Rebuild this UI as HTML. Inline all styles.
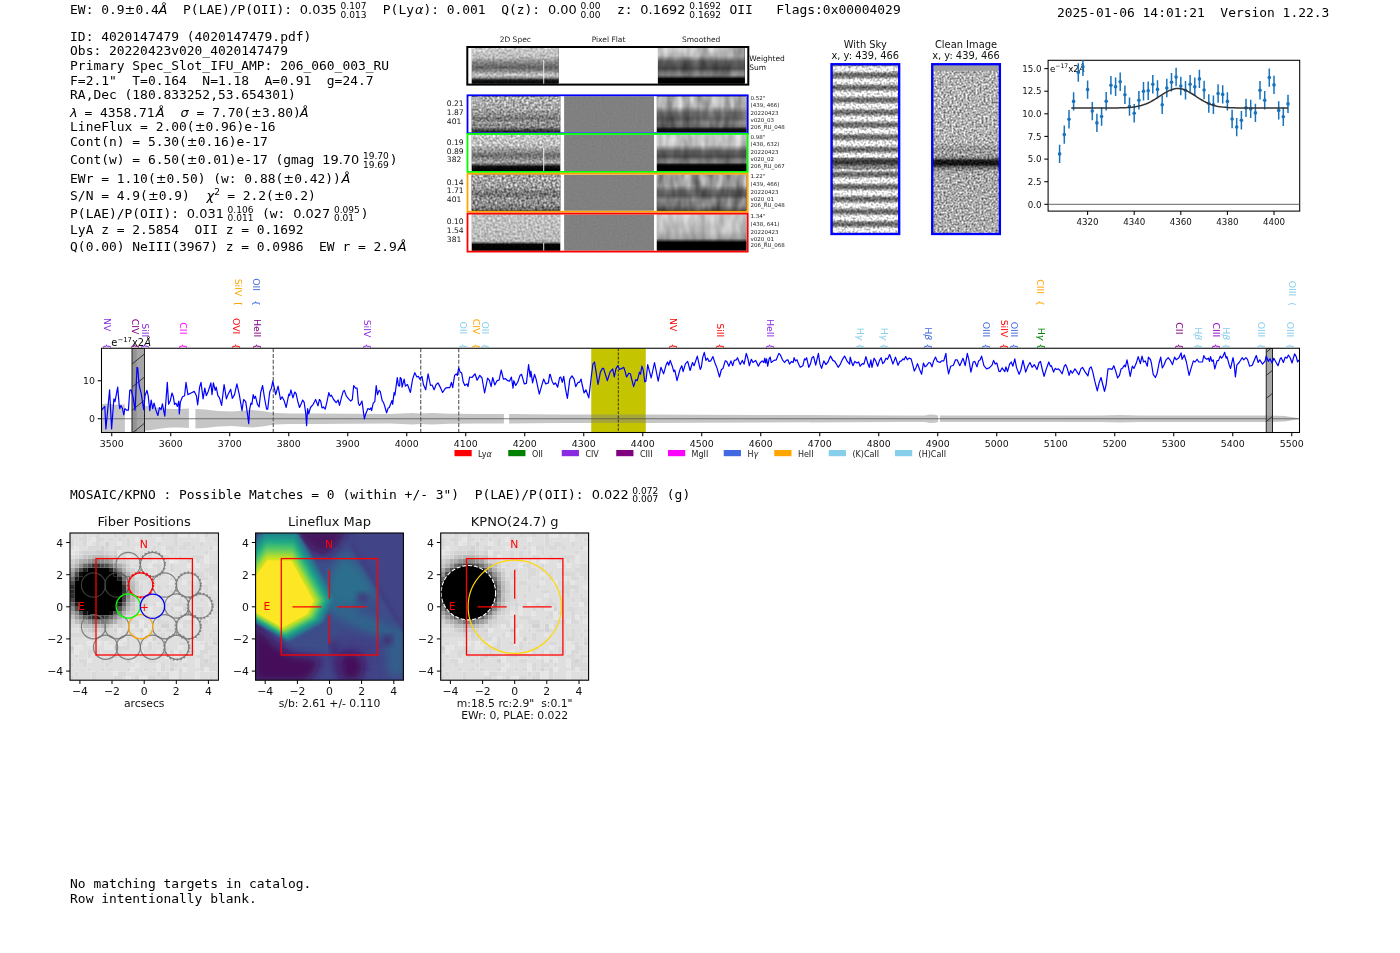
<!DOCTYPE html>
<html><head><meta charset="utf-8"><title>4020147479</title>
<style>
html,body{margin:0;padding:0;background:#fff}
svg{display:block}
text{fill:#000;white-space:pre}
.m{font-family:"DejaVu Sans Mono","Liberation Mono",monospace;font-size:12.93px}
.s{font-family:"DejaVu Sans","Liberation Sans",sans-serif;font-size:12.93px}
.i{font-family:"DejaVu Sans","Liberation Sans",sans-serif;font-size:12.93px;font-style:italic}
.t{font-family:"DejaVu Sans","Liberation Sans",sans-serif;font-size:9.4px;fill:#1a1a1a}
</style></head><body>
<svg width="1400" height="953" viewBox="0 0 1400 953">
<defs>
<linearGradient id="vg1" x1="0" y1="0" x2="0" y2="1"><stop offset="0" stop-color="#cccccc"/><stop offset="0.25" stop-color="#bdbdbd"/><stop offset="0.42" stop-color="#808080"/><stop offset="0.55" stop-color="#616161"/><stop offset="0.66" stop-color="#8c8c8c"/><stop offset="0.76" stop-color="#cccccc"/><stop offset="0.84" stop-color="#8c8c8c"/><stop offset="0.9" stop-color="#1a1a1a"/><stop offset="1" stop-color="#050505"/></linearGradient>
<filter id="nf1" x="0" y="0" width="100%" height="100%" color-interpolation-filters="sRGB"><feTurbulence type="fractalNoise" baseFrequency="0.42" numOctaves="1" seed="11" result="t"/><feColorMatrix in="t" type="matrix" values="1 0 0 0 0 1 0 0 0 0 1 0 0 0 0 0 0 0 0 1" result="g"/><feComposite in="SourceGraphic" in2="g" operator="arithmetic" k1="0.55" k2="0.725" k3="0.08" k4="-0.040"/></filter>
<linearGradient id="vg2" x1="0" y1="0" x2="0" y2="1"><stop offset="0" stop-color="#bdbdbd"/><stop offset="0.22" stop-color="#adadad"/><stop offset="0.38" stop-color="#5c5c5c"/><stop offset="0.58" stop-color="#474747"/><stop offset="0.68" stop-color="#757575"/><stop offset="0.76" stop-color="#858585"/><stop offset="0.82" stop-color="#474747"/><stop offset="0.86" stop-color="#050505"/><stop offset="1" stop-color="#000000"/></linearGradient>
<filter id="nf2" x="0" y="0" width="100%" height="100%" color-interpolation-filters="sRGB"><feTurbulence type="fractalNoise" baseFrequency="0.11 0.05" numOctaves="2" seed="5" result="t"/><feColorMatrix in="t" type="matrix" values="1 0 0 0 0 1 0 0 0 0 1 0 0 0 0 0 0 0 0 1" result="g"/><feComposite in="SourceGraphic" in2="g" operator="arithmetic" k1="0.7" k2="0.650" k3="0.0" k4="-0.000"/></filter>
<linearGradient id="vg3" x1="0" y1="0" x2="0" y2="1"><stop offset="0" stop-color="#b2b2b2"/><stop offset="0.35" stop-color="#a8a8a8"/><stop offset="0.5" stop-color="#8f8f8f"/><stop offset="0.62" stop-color="#757575"/><stop offset="0.72" stop-color="#949494"/><stop offset="0.85" stop-color="#8a8a8a"/><stop offset="0.93" stop-color="#474747"/><stop offset="1" stop-color="#1a1a1a"/></linearGradient>
<filter id="nf3" x="0" y="0" width="100%" height="100%" color-interpolation-filters="sRGB"><feTurbulence type="fractalNoise" baseFrequency="0.45" numOctaves="1" seed="20" result="t"/><feColorMatrix in="t" type="matrix" values="1 0 0 0 0 1 0 0 0 0 1 0 0 0 0 0 0 0 0 1" result="g"/><feComposite in="SourceGraphic" in2="g" operator="arithmetic" k1="1.25" k2="0.375" k3="0.15" k4="-0.075"/></filter>
<linearGradient id="vg4" x1="0" y1="0" x2="0" y2="1"><stop offset="0" stop-color="#808080"/><stop offset="1" stop-color="#808080"/></linearGradient>
<filter id="nf4" x="0" y="0" width="100%" height="100%" color-interpolation-filters="sRGB"><feTurbulence type="fractalNoise" baseFrequency="0.5" numOctaves="1" seed="40" result="t"/><feColorMatrix in="t" type="matrix" values="1 0 0 0 0 1 0 0 0 0 1 0 0 0 0 0 0 0 0 1" result="g"/><feComposite in="SourceGraphic" in2="g" operator="arithmetic" k1="0.12" k2="0.940" k3="0.0" k4="-0.000"/></filter>
<linearGradient id="vg5" x1="0" y1="0" x2="0" y2="1"><stop offset="0" stop-color="#b8b8b8"/><stop offset="0.28" stop-color="#adadad"/><stop offset="0.45" stop-color="#6b6b6b"/><stop offset="0.62" stop-color="#5c5c5c"/><stop offset="0.74" stop-color="#757575"/><stop offset="0.84" stop-color="#666666"/><stop offset="0.91" stop-color="#141414"/><stop offset="1" stop-color="#000000"/></linearGradient>
<filter id="nf5" x="0" y="0" width="100%" height="100%" color-interpolation-filters="sRGB"><feTurbulence type="fractalNoise" baseFrequency="0.12 0.045" numOctaves="2" seed="60" result="t"/><feColorMatrix in="t" type="matrix" values="1 0 0 0 0 1 0 0 0 0 1 0 0 0 0 0 0 0 0 1" result="g"/><feComposite in="SourceGraphic" in2="g" operator="arithmetic" k1="0.9" k2="0.550" k3="0.0" k4="-0.000"/></filter>
<linearGradient id="vg6" x1="0" y1="0" x2="0" y2="1"><stop offset="0" stop-color="#c7c7c7"/><stop offset="0.3" stop-color="#bdbdbd"/><stop offset="0.46" stop-color="#8c8c8c"/><stop offset="0.58" stop-color="#6b6b6b"/><stop offset="0.68" stop-color="#8c8c8c"/><stop offset="0.76" stop-color="#a8a8a8"/><stop offset="0.82" stop-color="#666666"/><stop offset="0.88" stop-color="#0d0d0d"/><stop offset="1" stop-color="#000000"/></linearGradient>
<filter id="nf6" x="0" y="0" width="100%" height="100%" color-interpolation-filters="sRGB"><feTurbulence type="fractalNoise" baseFrequency="0.45" numOctaves="1" seed="21" result="t"/><feColorMatrix in="t" type="matrix" values="1 0 0 0 0 1 0 0 0 0 1 0 0 0 0 0 0 0 0 1" result="g"/><feComposite in="SourceGraphic" in2="g" operator="arithmetic" k1="0.9" k2="0.550" k3="0.108" k4="-0.054"/></filter>
<linearGradient id="vg7" x1="0" y1="0" x2="0" y2="1"><stop offset="0" stop-color="#808080"/><stop offset="1" stop-color="#808080"/></linearGradient>
<filter id="nf7" x="0" y="0" width="100%" height="100%" color-interpolation-filters="sRGB"><feTurbulence type="fractalNoise" baseFrequency="0.5" numOctaves="1" seed="41" result="t"/><feColorMatrix in="t" type="matrix" values="1 0 0 0 0 1 0 0 0 0 1 0 0 0 0 0 0 0 0 1" result="g"/><feComposite in="SourceGraphic" in2="g" operator="arithmetic" k1="0.12" k2="0.940" k3="0.0" k4="-0.000"/></filter>
<linearGradient id="vg8" x1="0" y1="0" x2="0" y2="1"><stop offset="0" stop-color="#c7c7c7"/><stop offset="0.28" stop-color="#b8b8b8"/><stop offset="0.45" stop-color="#5c5c5c"/><stop offset="0.6" stop-color="#4c4c4c"/><stop offset="0.7" stop-color="#757575"/><stop offset="0.77" stop-color="#7a7a7a"/><stop offset="0.82" stop-color="#1a1a1a"/><stop offset="0.86" stop-color="#000000"/><stop offset="1" stop-color="#000000"/></linearGradient>
<filter id="nf8" x="0" y="0" width="100%" height="100%" color-interpolation-filters="sRGB"><feTurbulence type="fractalNoise" baseFrequency="0.12 0.045" numOctaves="2" seed="61" result="t"/><feColorMatrix in="t" type="matrix" values="1 0 0 0 0 1 0 0 0 0 1 0 0 0 0 0 0 0 0 1" result="g"/><feComposite in="SourceGraphic" in2="g" operator="arithmetic" k1="0.6" k2="0.700" k3="0.0" k4="-0.000"/></filter>
<linearGradient id="vg9" x1="0" y1="0" x2="0" y2="1"><stop offset="0" stop-color="#a3a3a3"/><stop offset="0.3" stop-color="#a3a3a3"/><stop offset="0.45" stop-color="#858585"/><stop offset="0.55" stop-color="#707070"/><stop offset="0.68" stop-color="#949494"/><stop offset="0.85" stop-color="#8a8a8a"/><stop offset="1" stop-color="#616161"/></linearGradient>
<filter id="nf9" x="0" y="0" width="100%" height="100%" color-interpolation-filters="sRGB"><feTurbulence type="fractalNoise" baseFrequency="0.45" numOctaves="1" seed="22" result="t"/><feColorMatrix in="t" type="matrix" values="1 0 0 0 0 1 0 0 0 0 1 0 0 0 0 0 0 0 0 1" result="g"/><feComposite in="SourceGraphic" in2="g" operator="arithmetic" k1="1.45" k2="0.275" k3="0.174" k4="-0.087"/></filter>
<linearGradient id="vg10" x1="0" y1="0" x2="0" y2="1"><stop offset="0" stop-color="#808080"/><stop offset="1" stop-color="#808080"/></linearGradient>
<filter id="nf10" x="0" y="0" width="100%" height="100%" color-interpolation-filters="sRGB"><feTurbulence type="fractalNoise" baseFrequency="0.5" numOctaves="1" seed="42" result="t"/><feColorMatrix in="t" type="matrix" values="1 0 0 0 0 1 0 0 0 0 1 0 0 0 0 0 0 0 0 1" result="g"/><feComposite in="SourceGraphic" in2="g" operator="arithmetic" k1="0.12" k2="0.940" k3="0.0" k4="-0.000"/></filter>
<linearGradient id="vg11" x1="0" y1="0" x2="0" y2="1"><stop offset="0" stop-color="#9e9e9e"/><stop offset="0.3" stop-color="#949494"/><stop offset="0.45" stop-color="#5c5c5c"/><stop offset="0.58" stop-color="#545454"/><stop offset="0.7" stop-color="#808080"/><stop offset="0.85" stop-color="#7a7a7a"/><stop offset="1" stop-color="#4c4c4c"/></linearGradient>
<filter id="nf11" x="0" y="0" width="100%" height="100%" color-interpolation-filters="sRGB"><feTurbulence type="fractalNoise" baseFrequency="0.12 0.045" numOctaves="2" seed="62" result="t"/><feColorMatrix in="t" type="matrix" values="1 0 0 0 0 1 0 0 0 0 1 0 0 0 0 0 0 0 0 1" result="g"/><feComposite in="SourceGraphic" in2="g" operator="arithmetic" k1="1.1" k2="0.450" k3="0.0" k4="-0.000"/></filter>
<linearGradient id="vg12" x1="0" y1="0" x2="0" y2="1"><stop offset="0" stop-color="#c2c2c2"/><stop offset="0.5" stop-color="#bdbdbd"/><stop offset="0.74" stop-color="#b8b8b8"/><stop offset="0.79" stop-color="#666666"/><stop offset="0.82" stop-color="#050505"/><stop offset="1" stop-color="#000000"/></linearGradient>
<filter id="nf12" x="0" y="0" width="100%" height="100%" color-interpolation-filters="sRGB"><feTurbulence type="fractalNoise" baseFrequency="0.45" numOctaves="1" seed="23" result="t"/><feColorMatrix in="t" type="matrix" values="1 0 0 0 0 1 0 0 0 0 1 0 0 0 0 0 0 0 0 1" result="g"/><feComposite in="SourceGraphic" in2="g" operator="arithmetic" k1="0.6" k2="0.700" k3="0.072" k4="-0.036"/></filter>
<linearGradient id="vg13" x1="0" y1="0" x2="0" y2="1"><stop offset="0" stop-color="#808080"/><stop offset="1" stop-color="#808080"/></linearGradient>
<filter id="nf13" x="0" y="0" width="100%" height="100%" color-interpolation-filters="sRGB"><feTurbulence type="fractalNoise" baseFrequency="0.5" numOctaves="1" seed="43" result="t"/><feColorMatrix in="t" type="matrix" values="1 0 0 0 0 1 0 0 0 0 1 0 0 0 0 0 0 0 0 1" result="g"/><feComposite in="SourceGraphic" in2="g" operator="arithmetic" k1="0.12" k2="0.940" k3="0.0" k4="-0.000"/></filter>
<linearGradient id="vg14" x1="0" y1="0" x2="0" y2="1"><stop offset="0" stop-color="#c7c7c7"/><stop offset="0.45" stop-color="#bdbdbd"/><stop offset="0.66" stop-color="#9e9e9e"/><stop offset="0.73" stop-color="#404040"/><stop offset="0.77" stop-color="#000000"/><stop offset="1" stop-color="#000000"/></linearGradient>
<filter id="nf14" x="0" y="0" width="100%" height="100%" color-interpolation-filters="sRGB"><feTurbulence type="fractalNoise" baseFrequency="0.12 0.045" numOctaves="2" seed="63" result="t"/><feColorMatrix in="t" type="matrix" values="1 0 0 0 0 1 0 0 0 0 1 0 0 0 0 0 0 0 0 1" result="g"/><feComposite in="SourceGraphic" in2="g" operator="arithmetic" k1="0.45" k2="0.775" k3="0.0" k4="-0.000"/></filter>
<linearGradient id="sky" gradientUnits="userSpaceOnUse" x1="0" y1="69.0" x2="0" y2="81.4" spreadMethod="repeat"><stop offset="0" stop-color="#f4f4f4"/><stop offset="0.14" stop-color="#ececec"/><stop offset="0.36" stop-color="#777"/><stop offset="0.5" stop-color="#606060"/><stop offset="0.64" stop-color="#777"/><stop offset="0.86" stop-color="#ececec"/><stop offset="1" stop-color="#f4f4f4"/></linearGradient>
<filter id="nf15" x="0" y="0" width="100%" height="100%" color-interpolation-filters="sRGB"><feTurbulence type="fractalNoise" baseFrequency="0.45" numOctaves="1" seed="7" result="t"/><feColorMatrix in="t" type="matrix" values="1 0 0 0 0 1 0 0 0 0 1 0 0 0 0 0 0 0 0 1" result="g"/><feComposite in="SourceGraphic" in2="g" operator="arithmetic" k1="1.1" k2="0.450" k3="0.15" k4="-0.075"/></filter>
<filter id="nf16" x="0" y="0" width="100%" height="100%" color-interpolation-filters="sRGB"><feTurbulence type="fractalNoise" baseFrequency="0.5" numOctaves="1" seed="9" result="t"/><feColorMatrix in="t" type="matrix" values="1 0 0 0 0 1 0 0 0 0 1 0 0 0 0 0 0 0 0 1" result="g"/><feComposite in="SourceGraphic" in2="g" operator="arithmetic" k1="1.3" k2="0.350" k3="0.2" k4="-0.100"/></filter>
<linearGradient id="vg15" x1="0" y1="0" x2="0" y2="1"><stop offset="0" stop-color="#b2b2b2"/><stop offset="0.47" stop-color="#b2b2b2"/><stop offset="0.5" stop-color="#8f8f8f"/><stop offset="0.53" stop-color="#a8a8a8"/><stop offset="0.552" stop-color="#808080"/><stop offset="0.568" stop-color="#1a1a1a"/><stop offset="0.59" stop-color="#141414"/><stop offset="0.608" stop-color="#6b6b6b"/><stop offset="0.635" stop-color="#a8a8a8"/><stop offset="1" stop-color="#adadad"/></linearGradient>
<clipPath id="gclip"><rect x="1048.1" y="60.3" width="251.6" height="150.8"/></clipPath>
<clipPath id="sclip"><rect x="101.5" y="348.25" width="1198.0" height="84.25"/></clipPath>
<g id="kpno"><path fill="#000000" d="M17.32 34.64h21.70v4.38h-21.70zM12.99 38.96h30.36v4.38h-30.36zM8.66 43.29h39.01v4.38h-39.01zM4.33 47.62h47.67v4.38h-47.67zM4.33 51.95h47.67v4.38h-47.67zM4.33 56.28h47.67v4.38h-47.67zM4.33 60.61h47.67v4.38h-47.67zM4.33 64.94h47.67v4.38h-47.67zM8.66 69.27h39.01v4.38h-39.01zM8.66 73.60h39.01v4.38h-39.01zM17.32 77.93h21.70v4.38h-21.70z"/><path fill="#060606" d="M43.29 38.96h4.38v4.38h-4.38z"/><path fill="#0d0d0d" d="M8.66 38.96h4.38v4.38h-4.38zM38.96 77.93h4.38v4.38h-4.38z"/><path fill="#131313" d="M12.99 77.93h4.38v4.38h-4.38z"/><path fill="#1a1a1a" d="M4.33 43.29h4.38v4.38h-4.38zM47.62 43.29h4.38v4.38h-4.38zM4.33 69.27h4.38v4.38h-4.38zM47.62 69.27h4.38v4.38h-4.38zM25.98 82.26h4.38v4.38h-4.38z"/><path fill="#202020" d="M12.99 34.64h4.38v4.38h-4.38z"/><path fill="#262626" d="M38.96 34.64h4.38v4.38h-4.38zM0.00 56.28h4.38v4.38h-4.38z"/><path fill="#2d2d2d" d="M0.00 51.95h4.38v4.38h-4.38zM0.00 60.61h4.38v4.38h-4.38zM21.65 82.26h4.38v4.38h-4.38zM30.31 82.26h4.38v4.38h-4.38z"/><path fill="#333333" d="M25.98 30.31h4.38v4.38h-4.38zM51.95 51.95h4.38v4.38h-4.38zM51.95 56.28h4.38v4.38h-4.38z"/><path fill="#393939" d="M21.65 30.31h4.38v4.38h-4.38z"/><path fill="#404040" d="M51.95 60.61h4.38v4.38h-4.38zM17.32 82.26h4.38v4.38h-4.38z"/><path fill="#464646" d="M30.31 30.31h4.38v4.38h-4.38zM0.00 64.94h4.38v4.38h-4.38zM51.95 64.94h4.38v4.38h-4.38zM34.64 82.26h4.38v4.38h-4.38z"/><path fill="#4c4c4c" d="M8.66 34.64h4.38v4.38h-4.38zM4.33 38.96h4.38v4.38h-4.38zM0.00 47.62h4.38v4.38h-4.38zM4.33 73.60h4.38v4.38h-4.38zM8.66 77.93h4.38v4.38h-4.38zM43.29 77.93h4.38v4.38h-4.38z"/><path fill="#535353" d="M17.32 30.31h4.38v4.38h-4.38zM34.64 30.31h4.38v4.38h-4.38zM51.95 47.62h4.38v4.38h-4.38zM47.62 73.60h4.38v4.38h-4.38z"/><path fill="#595959" d="M43.29 34.64h4.38v4.38h-4.38zM47.62 38.96h4.38v4.38h-4.38zM12.99 82.26h4.38v4.38h-4.38z"/><path fill="#666666" d="M0.00 69.27h4.38v4.38h-4.38zM51.95 69.27h4.38v4.38h-4.38zM38.96 82.26h4.38v4.38h-4.38z"/><path fill="#6c6c6c" d="M12.99 30.31h4.38v4.38h-4.38zM0.00 43.29h4.38v4.38h-4.38z"/><path fill="#737373" d="M38.96 30.31h4.38v4.38h-4.38zM51.95 43.29h4.38v4.38h-4.38z"/><path fill="#797979" d="M21.65 86.59h4.38v4.38h-4.38zM30.31 86.59h4.38v4.38h-4.38z"/><path fill="#808080" d="M4.33 34.64h4.38v4.38h-4.38zM56.28 56.28h4.38v4.38h-4.38zM47.62 77.93h4.38v4.38h-4.38zM25.98 86.59h4.38v4.38h-4.38z"/><path fill="#868686" d="M25.98 25.98h4.38v4.38h-4.38zM56.28 60.61h4.38v4.38h-4.38zM4.33 77.93h4.38v4.38h-4.38zM8.66 82.26h4.38v4.38h-4.38z"/><path fill="#8c8c8c" d="M21.65 25.98h4.38v4.38h-4.38zM30.31 25.98h4.38v4.38h-4.38zM47.62 34.64h4.38v4.38h-4.38zM56.28 51.95h4.38v4.38h-4.38zM0.00 73.60h4.38v4.38h-4.38zM51.95 73.60h4.38v4.38h-4.38zM43.29 82.26h4.38v4.38h-4.38zM34.64 86.59h4.38v4.38h-4.38z"/><path fill="#939393" d="M8.66 30.31h4.38v4.38h-4.38zM43.29 30.31h4.38v4.38h-4.38zM0.00 38.96h4.38v4.38h-4.38zM51.95 38.96h4.38v4.38h-4.38zM56.28 64.94h4.38v4.38h-4.38zM17.32 86.59h4.38v4.38h-4.38z"/><path fill="#999999" d="M17.32 25.98h4.38v4.38h-4.38zM34.64 25.98h4.38v4.38h-4.38zM56.28 47.62h4.38v4.38h-4.38z"/><path fill="#9f9f9f" d="M4.33 82.26h4.38v4.38h-4.38zM38.96 86.59h4.38v4.38h-4.38z"/><path fill="#a6a6a6" d="M38.96 25.98h4.38v4.38h-4.38zM56.28 43.29h4.38v4.38h-4.38zM56.28 69.27h4.38v4.38h-4.38zM0.00 77.93h4.38v4.38h-4.38zM12.99 86.59h4.38v4.38h-4.38z"/><path fill="#acacac" d="M12.99 25.98h4.38v4.38h-4.38zM47.62 30.31h4.38v4.38h-4.38zM0.00 34.64h4.38v4.38h-4.38zM47.62 82.26h4.38v4.38h-4.38z"/><path fill="#b2b2b2" d="M8.66 25.98h4.38v4.38h-4.38zM4.33 30.31h4.38v4.38h-4.38zM51.95 34.64h4.38v4.38h-4.38zM56.28 38.96h4.38v4.38h-4.38zM51.95 77.93h4.38v4.38h-4.38zM8.66 86.59h4.38v4.38h-4.38zM43.29 86.59h4.38v4.38h-4.38zM21.65 90.92h4.38v4.38h-4.38zM30.31 90.92h4.38v4.38h-4.38z"/><path fill="#b9b9b9" d="M21.65 21.65h13.04v4.38h-13.04zM60.61 51.95h4.38v4.38h-4.38zM60.61 56.28h4.38v4.38h-4.38zM60.61 64.94h4.38v4.38h-4.38zM56.28 73.60h4.38v4.38h-4.38zM25.98 90.92h4.38v4.38h-4.38z"/><path fill="#bfbfbf" d="M17.32 21.65h4.38v4.38h-4.38zM34.64 21.65h4.38v4.38h-4.38zM43.29 25.98h4.38v4.38h-4.38zM51.95 30.31h4.38v4.38h-4.38zM60.61 47.62h4.38v4.38h-4.38zM60.61 60.61h4.38v4.38h-4.38zM0.00 82.26h4.38v4.38h-4.38zM4.33 86.59h4.38v4.38h-4.38zM12.99 90.92h8.71v4.38h-8.71zM34.64 90.92h4.38v4.38h-4.38zM21.65 95.25h4.38v4.38h-4.38z"/><path fill="#c6c6c6" d="M12.99 21.65h4.38v4.38h-4.38zM43.29 21.65h4.38v4.38h-4.38zM4.33 25.98h4.38v4.38h-4.38zM0.00 30.31h4.38v4.38h-4.38zM60.61 43.29h4.38v4.38h-4.38zM60.61 69.27h4.38v4.38h-4.38zM51.95 82.26h4.38v4.38h-4.38z"/><path fill="#cccccc" d="M25.98 17.32h8.71v4.38h-8.71zM38.96 21.65h4.38v4.38h-4.38zM56.28 34.64h4.38v4.38h-4.38zM60.61 38.96h4.38v4.38h-4.38zM64.94 56.28h4.38v4.38h-4.38zM60.61 73.60h4.38v4.38h-4.38zM56.28 77.93h4.38v4.38h-4.38zM47.62 86.59h4.38v4.38h-4.38zM38.96 90.92h4.38v4.38h-4.38zM17.32 95.25h4.38v4.38h-4.38zM30.31 95.25h4.38v4.38h-4.38z"/><path fill="#d2d2d2" d="M69.27 4.33h4.38v4.38h-4.38zM34.64 8.66h4.38v4.38h-4.38zM30.31 12.99h4.38v4.38h-4.38zM12.99 17.32h13.04v4.38h-13.04zM34.64 17.32h4.38v4.38h-4.38zM43.29 17.32h4.38v4.38h-4.38zM8.66 21.65h4.38v4.38h-4.38zM0.00 25.98h4.38v4.38h-4.38zM47.62 25.98h8.71v4.38h-8.71zM56.28 30.31h4.38v4.38h-4.38zM60.61 34.64h4.38v4.38h-4.38zM64.94 47.62h4.38v4.38h-4.38zM64.94 51.95h4.38v4.38h-4.38zM64.94 60.61h4.38v4.38h-4.38zM64.94 64.94h4.38v4.38h-4.38zM73.60 69.27h4.38v4.38h-4.38zM112.56 73.60h4.38v4.38h-4.38zM60.61 77.93h4.38v4.38h-4.38zM0.00 86.59h4.38v4.38h-4.38zM51.95 86.59h4.38v4.38h-4.38zM8.66 90.92h4.38v4.38h-4.38zM47.62 90.92h4.38v4.38h-4.38zM90.92 90.92h8.71v4.38h-8.71zM103.91 90.92h4.38v4.38h-4.38zM12.99 95.25h4.38v4.38h-4.38zM25.98 95.25h4.38v4.38h-4.38zM34.64 95.25h4.38v4.38h-4.38zM43.29 95.25h4.38v4.38h-4.38zM69.27 95.25h4.38v4.38h-4.38zM103.91 95.25h4.38v4.38h-4.38zM21.65 99.58h4.38v4.38h-4.38zM30.31 99.58h4.38v4.38h-4.38zM82.26 103.91h4.38v4.38h-4.38zM142.87 108.24h4.38v4.38h-4.38zM0.00 112.56h4.38v4.38h-4.38zM43.29 121.22h4.38v4.38h-4.38zM56.28 125.55h4.38v4.38h-4.38zM134.21 125.55h4.38v4.38h-4.38zM99.58 134.21h4.38v4.38h-4.38z"/><path fill="#d9d9d9" d="M12.99 0.00h4.38v4.38h-4.38zM25.98 0.00h4.38v4.38h-4.38zM43.29 0.00h4.38v4.38h-4.38zM51.95 0.00h4.38v4.38h-4.38zM77.93 0.00h4.38v4.38h-4.38zM90.92 0.00h4.38v4.38h-4.38zM103.91 0.00h4.38v4.38h-4.38zM134.21 0.00h4.38v4.38h-4.38zM0.00 4.33h4.38v4.38h-4.38zM8.66 4.33h8.71v4.38h-8.71zM25.98 4.33h8.71v4.38h-8.71zM38.96 4.33h4.38v4.38h-4.38zM47.62 4.33h4.38v4.38h-4.38zM56.28 4.33h4.38v4.38h-4.38zM103.91 4.33h4.38v4.38h-4.38zM142.87 4.33h4.38v4.38h-4.38zM0.00 8.66h4.38v4.38h-4.38zM12.99 8.66h4.38v4.38h-4.38zM25.98 8.66h4.38v4.38h-4.38zM56.28 8.66h4.38v4.38h-4.38zM86.59 8.66h4.38v4.38h-4.38zM103.91 8.66h4.38v4.38h-4.38zM112.56 8.66h8.71v4.38h-8.71zM129.88 8.66h4.38v4.38h-4.38zM17.32 12.99h13.04v4.38h-13.04zM34.64 12.99h4.38v4.38h-4.38zM43.29 12.99h8.71v4.38h-8.71zM82.26 12.99h4.38v4.38h-4.38zM95.25 12.99h8.71v4.38h-8.71zM108.24 12.99h8.71v4.38h-8.71zM121.22 12.99h4.38v4.38h-4.38zM138.54 12.99h4.38v4.38h-4.38zM8.66 17.32h4.38v4.38h-4.38zM38.96 17.32h4.38v4.38h-4.38zM51.95 17.32h8.71v4.38h-8.71zM69.27 17.32h4.38v4.38h-4.38zM77.93 17.32h4.38v4.38h-4.38zM86.59 17.32h4.38v4.38h-4.38zM99.58 17.32h4.38v4.38h-4.38zM134.21 17.32h4.38v4.38h-4.38zM4.33 21.65h4.38v4.38h-4.38zM51.95 21.65h4.38v4.38h-4.38zM69.27 21.65h4.38v4.38h-4.38zM77.93 21.65h4.38v4.38h-4.38zM90.92 21.65h8.71v4.38h-8.71zM108.24 21.65h4.38v4.38h-4.38zM121.22 21.65h13.04v4.38h-13.04zM56.28 25.98h4.38v4.38h-4.38zM116.89 25.98h4.38v4.38h-4.38zM125.55 25.98h4.38v4.38h-4.38zM64.94 30.31h4.38v4.38h-4.38zM82.26 30.31h8.71v4.38h-8.71zM99.58 30.31h4.38v4.38h-4.38zM138.54 30.31h8.71v4.38h-8.71zM73.60 34.64h4.38v4.38h-4.38zM86.59 34.64h8.71v4.38h-8.71zM99.58 34.64h4.38v4.38h-4.38zM134.21 34.64h13.04v4.38h-13.04zM69.27 38.96h4.38v4.38h-4.38zM86.59 38.96h8.71v4.38h-8.71zM108.24 38.96h4.38v4.38h-4.38zM121.22 38.96h13.04v4.38h-13.04zM138.54 38.96h8.71v4.38h-8.71zM64.94 43.29h13.04v4.38h-13.04zM86.59 43.29h4.38v4.38h-4.38zM99.58 43.29h4.38v4.38h-4.38zM108.24 43.29h4.38v4.38h-4.38zM129.88 43.29h8.71v4.38h-8.71zM142.87 43.29h4.38v4.38h-4.38zM77.93 47.62h8.71v4.38h-8.71zM116.89 47.62h4.38v4.38h-4.38zM125.55 47.62h4.38v4.38h-4.38zM69.27 51.95h4.38v4.38h-4.38zM86.59 51.95h4.38v4.38h-4.38zM95.25 51.95h4.38v4.38h-4.38zM121.22 51.95h17.37v4.38h-17.37zM69.27 56.28h4.38v4.38h-4.38zM86.59 56.28h4.38v4.38h-4.38zM99.58 56.28h8.71v4.38h-8.71zM116.89 56.28h13.04v4.38h-13.04zM134.21 56.28h4.38v4.38h-4.38zM69.27 60.61h8.71v4.38h-8.71zM82.26 60.61h4.38v4.38h-4.38zM125.55 60.61h4.38v4.38h-4.38zM138.54 60.61h4.38v4.38h-4.38zM69.27 64.94h8.71v4.38h-8.71zM108.24 64.94h4.38v4.38h-4.38zM129.88 64.94h4.38v4.38h-4.38zM138.54 64.94h8.71v4.38h-8.71zM64.94 69.27h8.71v4.38h-8.71zM82.26 69.27h4.38v4.38h-4.38zM95.25 69.27h4.38v4.38h-4.38zM103.91 69.27h13.04v4.38h-13.04zM142.87 69.27h4.38v4.38h-4.38zM64.94 73.60h4.38v4.38h-4.38zM73.60 73.60h4.38v4.38h-4.38zM90.92 73.60h4.38v4.38h-4.38zM99.58 73.60h4.38v4.38h-4.38zM125.55 73.60h8.71v4.38h-8.71zM64.94 77.93h4.38v4.38h-4.38zM108.24 77.93h4.38v4.38h-4.38zM116.89 77.93h4.38v4.38h-4.38zM129.88 77.93h4.38v4.38h-4.38zM142.87 77.93h4.38v4.38h-4.38zM56.28 82.26h8.71v4.38h-8.71zM77.93 82.26h13.04v4.38h-13.04zM103.91 82.26h8.71v4.38h-8.71zM129.88 82.26h4.38v4.38h-4.38zM138.54 82.26h4.38v4.38h-4.38zM56.28 86.59h13.04v4.38h-13.04zM86.59 86.59h13.04v4.38h-13.04zM112.56 86.59h13.04v4.38h-13.04zM129.88 86.59h8.71v4.38h-8.71zM0.00 90.92h8.71v4.38h-8.71zM43.29 90.92h4.38v4.38h-4.38zM51.95 90.92h4.38v4.38h-4.38zM64.94 90.92h4.38v4.38h-4.38zM73.60 90.92h4.38v4.38h-4.38zM112.56 90.92h4.38v4.38h-4.38zM8.66 95.25h4.38v4.38h-4.38zM38.96 95.25h4.38v4.38h-4.38zM86.59 95.25h4.38v4.38h-4.38zM95.25 95.25h8.71v4.38h-8.71zM108.24 95.25h4.38v4.38h-4.38zM129.88 95.25h4.38v4.38h-4.38zM142.87 95.25h4.38v4.38h-4.38zM0.00 99.58h21.70v4.38h-21.70zM34.64 99.58h13.04v4.38h-13.04zM60.61 99.58h4.38v4.38h-4.38zM90.92 99.58h4.38v4.38h-4.38zM129.88 99.58h4.38v4.38h-4.38zM138.54 99.58h4.38v4.38h-4.38zM30.31 103.91h8.71v4.38h-8.71zM43.29 103.91h8.71v4.38h-8.71zM56.28 103.91h4.38v4.38h-4.38zM90.92 103.91h4.38v4.38h-4.38zM125.55 103.91h8.71v4.38h-8.71zM142.87 103.91h4.38v4.38h-4.38zM4.33 108.24h4.38v4.38h-4.38zM56.28 108.24h4.38v4.38h-4.38zM69.27 108.24h4.38v4.38h-4.38zM77.93 108.24h4.38v4.38h-4.38zM86.59 108.24h4.38v4.38h-4.38zM108.24 108.24h8.71v4.38h-8.71zM134.21 108.24h4.38v4.38h-4.38zM21.65 112.56h4.38v4.38h-4.38zM43.29 112.56h17.37v4.38h-17.37zM77.93 112.56h4.38v4.38h-4.38zM95.25 112.56h4.38v4.38h-4.38zM116.89 112.56h4.38v4.38h-4.38zM134.21 112.56h8.71v4.38h-8.71zM0.00 116.89h4.38v4.38h-4.38zM17.32 116.89h13.04v4.38h-13.04zM47.62 116.89h4.38v4.38h-4.38zM90.92 116.89h4.38v4.38h-4.38zM99.58 116.89h4.38v4.38h-4.38zM108.24 116.89h4.38v4.38h-4.38zM116.89 116.89h8.71v4.38h-8.71zM129.88 116.89h8.71v4.38h-8.71zM4.33 121.22h4.38v4.38h-4.38zM17.32 121.22h4.38v4.38h-4.38zM25.98 121.22h4.38v4.38h-4.38zM38.96 121.22h4.38v4.38h-4.38zM47.62 121.22h8.71v4.38h-8.71zM69.27 121.22h8.71v4.38h-8.71zM86.59 121.22h4.38v4.38h-4.38zM125.55 121.22h8.71v4.38h-8.71zM138.54 121.22h8.71v4.38h-8.71zM8.66 125.55h8.71v4.38h-8.71zM30.31 125.55h4.38v4.38h-4.38zM38.96 125.55h4.38v4.38h-4.38zM77.93 125.55h8.71v4.38h-8.71zM99.58 125.55h4.38v4.38h-4.38zM108.24 125.55h4.38v4.38h-4.38zM129.88 125.55h4.38v4.38h-4.38zM138.54 125.55h4.38v4.38h-4.38zM0.00 129.88h4.38v4.38h-4.38zM12.99 129.88h4.38v4.38h-4.38zM34.64 129.88h4.38v4.38h-4.38zM90.92 129.88h4.38v4.38h-4.38zM99.58 129.88h8.71v4.38h-8.71zM112.56 129.88h4.38v4.38h-4.38zM129.88 129.88h17.37v4.38h-17.37zM17.32 134.21h4.38v4.38h-4.38zM30.31 134.21h4.38v4.38h-4.38zM38.96 134.21h4.38v4.38h-4.38zM56.28 134.21h4.38v4.38h-4.38zM73.60 134.21h4.38v4.38h-4.38zM82.26 134.21h4.38v4.38h-4.38zM90.92 134.21h4.38v4.38h-4.38zM108.24 134.21h4.38v4.38h-4.38zM129.88 134.21h4.38v4.38h-4.38zM138.54 134.21h8.71v4.38h-8.71zM4.33 138.54h4.38v4.38h-4.38zM21.65 138.54h4.38v4.38h-4.38zM47.62 138.54h8.71v4.38h-8.71zM86.59 138.54h4.38v4.38h-4.38zM95.25 138.54h4.38v4.38h-4.38zM108.24 138.54h4.38v4.38h-4.38zM0.00 142.87h4.38v4.38h-4.38zM21.65 142.87h4.38v4.38h-4.38zM43.29 142.87h8.71v4.38h-8.71zM64.94 142.87h4.38v4.38h-4.38zM77.93 142.87h8.71v4.38h-8.71zM90.92 142.87h8.71v4.38h-8.71zM108.24 142.87h4.38v4.38h-4.38zM138.54 142.87h4.38v4.38h-4.38z"/><path fill="#dfdfdf" d="M0.00 0.00h13.04v4.38h-13.04zM17.32 0.00h8.71v4.38h-8.71zM30.31 0.00h13.04v4.38h-13.04zM47.62 0.00h4.38v4.38h-4.38zM56.28 0.00h21.70v4.38h-21.70zM82.26 0.00h8.71v4.38h-8.71zM95.25 0.00h8.71v4.38h-8.71zM116.89 0.00h4.38v4.38h-4.38zM125.55 0.00h4.38v4.38h-4.38zM138.54 0.00h8.71v4.38h-8.71zM4.33 4.33h4.38v4.38h-4.38zM17.32 4.33h4.38v4.38h-4.38zM34.64 4.33h4.38v4.38h-4.38zM43.29 4.33h4.38v4.38h-4.38zM51.95 4.33h4.38v4.38h-4.38zM60.61 4.33h4.38v4.38h-4.38zM73.60 4.33h13.04v4.38h-13.04zM90.92 4.33h13.04v4.38h-13.04zM108.24 4.33h21.70v4.38h-21.70zM134.21 4.33h8.71v4.38h-8.71zM4.33 8.66h8.71v4.38h-8.71zM21.65 8.66h4.38v4.38h-4.38zM30.31 8.66h4.38v4.38h-4.38zM38.96 8.66h8.71v4.38h-8.71zM51.95 8.66h4.38v4.38h-4.38zM60.61 8.66h26.03v4.38h-26.03zM90.92 8.66h13.04v4.38h-13.04zM108.24 8.66h4.38v4.38h-4.38zM121.22 8.66h8.71v4.38h-8.71zM134.21 8.66h13.04v4.38h-13.04zM0.00 12.99h4.38v4.38h-4.38zM8.66 12.99h8.71v4.38h-8.71zM38.96 12.99h4.38v4.38h-4.38zM51.95 12.99h13.04v4.38h-13.04zM69.27 12.99h13.04v4.38h-13.04zM86.59 12.99h4.38v4.38h-4.38zM103.91 12.99h4.38v4.38h-4.38zM116.89 12.99h4.38v4.38h-4.38zM125.55 12.99h13.04v4.38h-13.04zM4.33 17.32h4.38v4.38h-4.38zM60.61 17.32h8.71v4.38h-8.71zM73.60 17.32h4.38v4.38h-4.38zM82.26 17.32h4.38v4.38h-4.38zM95.25 17.32h4.38v4.38h-4.38zM103.91 17.32h30.36v4.38h-30.36zM138.54 17.32h8.71v4.38h-8.71zM0.00 21.65h4.38v4.38h-4.38zM47.62 21.65h4.38v4.38h-4.38zM60.61 21.65h8.71v4.38h-8.71zM73.60 21.65h4.38v4.38h-4.38zM82.26 21.65h8.71v4.38h-8.71zM99.58 21.65h8.71v4.38h-8.71zM112.56 21.65h8.71v4.38h-8.71zM138.54 21.65h8.71v4.38h-8.71zM60.61 25.98h21.70v4.38h-21.70zM86.59 25.98h4.38v4.38h-4.38zM95.25 25.98h4.38v4.38h-4.38zM108.24 25.98h8.71v4.38h-8.71zM129.88 25.98h4.38v4.38h-4.38zM138.54 25.98h8.71v4.38h-8.71zM60.61 30.31h4.38v4.38h-4.38zM69.27 30.31h8.71v4.38h-8.71zM90.92 30.31h8.71v4.38h-8.71zM103.91 30.31h13.04v4.38h-13.04zM121.22 30.31h4.38v4.38h-4.38zM129.88 30.31h8.71v4.38h-8.71zM64.94 34.64h8.71v4.38h-8.71zM77.93 34.64h8.71v4.38h-8.71zM95.25 34.64h4.38v4.38h-4.38zM103.91 34.64h30.36v4.38h-30.36zM64.94 38.96h4.38v4.38h-4.38zM73.60 38.96h13.04v4.38h-13.04zM95.25 38.96h4.38v4.38h-4.38zM103.91 38.96h4.38v4.38h-4.38zM112.56 38.96h8.71v4.38h-8.71zM134.21 38.96h4.38v4.38h-4.38zM77.93 43.29h8.71v4.38h-8.71zM90.92 43.29h8.71v4.38h-8.71zM103.91 43.29h4.38v4.38h-4.38zM112.56 43.29h8.71v4.38h-8.71zM125.55 43.29h4.38v4.38h-4.38zM138.54 43.29h4.38v4.38h-4.38zM69.27 47.62h8.71v4.38h-8.71zM86.59 47.62h13.04v4.38h-13.04zM103.91 47.62h8.71v4.38h-8.71zM121.22 47.62h4.38v4.38h-4.38zM134.21 47.62h13.04v4.38h-13.04zM73.60 51.95h13.04v4.38h-13.04zM90.92 51.95h4.38v4.38h-4.38zM99.58 51.95h21.70v4.38h-21.70zM138.54 51.95h4.38v4.38h-4.38zM73.60 56.28h13.04v4.38h-13.04zM90.92 56.28h8.71v4.38h-8.71zM108.24 56.28h8.71v4.38h-8.71zM129.88 56.28h4.38v4.38h-4.38zM138.54 56.28h8.71v4.38h-8.71zM77.93 60.61h4.38v4.38h-4.38zM86.59 60.61h17.37v4.38h-17.37zM108.24 60.61h17.37v4.38h-17.37zM129.88 60.61h8.71v4.38h-8.71zM142.87 60.61h4.38v4.38h-4.38zM77.93 64.94h17.37v4.38h-17.37zM99.58 64.94h8.71v4.38h-8.71zM112.56 64.94h17.37v4.38h-17.37zM134.21 64.94h4.38v4.38h-4.38zM77.93 69.27h4.38v4.38h-4.38zM90.92 69.27h4.38v4.38h-4.38zM99.58 69.27h4.38v4.38h-4.38zM116.89 69.27h21.70v4.38h-21.70zM69.27 73.60h4.38v4.38h-4.38zM82.26 73.60h8.71v4.38h-8.71zM95.25 73.60h4.38v4.38h-4.38zM116.89 73.60h8.71v4.38h-8.71zM134.21 73.60h13.04v4.38h-13.04zM73.60 77.93h4.38v4.38h-4.38zM82.26 77.93h8.71v4.38h-8.71zM95.25 77.93h13.04v4.38h-13.04zM121.22 77.93h8.71v4.38h-8.71zM134.21 77.93h8.71v4.38h-8.71zM64.94 82.26h13.04v4.38h-13.04zM90.92 82.26h13.04v4.38h-13.04zM121.22 82.26h8.71v4.38h-8.71zM142.87 82.26h4.38v4.38h-4.38zM73.60 86.59h13.04v4.38h-13.04zM99.58 86.59h13.04v4.38h-13.04zM138.54 86.59h4.38v4.38h-4.38zM56.28 90.92h4.38v4.38h-4.38zM82.26 90.92h8.71v4.38h-8.71zM99.58 90.92h4.38v4.38h-4.38zM116.89 90.92h30.36v4.38h-30.36zM0.00 95.25h8.71v4.38h-8.71zM51.95 95.25h17.37v4.38h-17.37zM77.93 95.25h8.71v4.38h-8.71zM90.92 95.25h4.38v4.38h-4.38zM112.56 95.25h17.37v4.38h-17.37zM134.21 95.25h8.71v4.38h-8.71zM25.98 99.58h4.38v4.38h-4.38zM47.62 99.58h13.04v4.38h-13.04zM69.27 99.58h4.38v4.38h-4.38zM77.93 99.58h13.04v4.38h-13.04zM95.25 99.58h8.71v4.38h-8.71zM108.24 99.58h21.70v4.38h-21.70zM134.21 99.58h4.38v4.38h-4.38zM142.87 99.58h4.38v4.38h-4.38zM0.00 103.91h30.36v4.38h-30.36zM38.96 103.91h4.38v4.38h-4.38zM60.61 103.91h17.37v4.38h-17.37zM86.59 103.91h4.38v4.38h-4.38zM95.25 103.91h30.36v4.38h-30.36zM134.21 103.91h8.71v4.38h-8.71zM0.00 108.24h4.38v4.38h-4.38zM8.66 108.24h8.71v4.38h-8.71zM21.65 108.24h4.38v4.38h-4.38zM30.31 108.24h4.38v4.38h-4.38zM38.96 108.24h8.71v4.38h-8.71zM51.95 108.24h4.38v4.38h-4.38zM60.61 108.24h8.71v4.38h-8.71zM82.26 108.24h4.38v4.38h-4.38zM90.92 108.24h17.37v4.38h-17.37zM116.89 108.24h8.71v4.38h-8.71zM129.88 108.24h4.38v4.38h-4.38zM138.54 108.24h4.38v4.38h-4.38zM12.99 112.56h8.71v4.38h-8.71zM25.98 112.56h8.71v4.38h-8.71zM60.61 112.56h17.37v4.38h-17.37zM82.26 112.56h13.04v4.38h-13.04zM99.58 112.56h8.71v4.38h-8.71zM112.56 112.56h4.38v4.38h-4.38zM121.22 112.56h4.38v4.38h-4.38zM142.87 112.56h4.38v4.38h-4.38zM8.66 116.89h8.71v4.38h-8.71zM30.31 116.89h17.37v4.38h-17.37zM51.95 116.89h17.37v4.38h-17.37zM73.60 116.89h13.04v4.38h-13.04zM95.25 116.89h4.38v4.38h-4.38zM112.56 116.89h4.38v4.38h-4.38zM138.54 116.89h8.71v4.38h-8.71zM0.00 121.22h4.38v4.38h-4.38zM8.66 121.22h8.71v4.38h-8.71zM21.65 121.22h4.38v4.38h-4.38zM30.31 121.22h8.71v4.38h-8.71zM56.28 121.22h4.38v4.38h-4.38zM64.94 121.22h4.38v4.38h-4.38zM77.93 121.22h8.71v4.38h-8.71zM90.92 121.22h4.38v4.38h-4.38zM99.58 121.22h4.38v4.38h-4.38zM108.24 121.22h17.37v4.38h-17.37zM134.21 121.22h4.38v4.38h-4.38zM0.00 125.55h8.71v4.38h-8.71zM21.65 125.55h8.71v4.38h-8.71zM34.64 125.55h4.38v4.38h-4.38zM43.29 125.55h13.04v4.38h-13.04zM64.94 125.55h13.04v4.38h-13.04zM86.59 125.55h13.04v4.38h-13.04zM116.89 125.55h8.71v4.38h-8.71zM142.87 125.55h4.38v4.38h-4.38zM4.33 129.88h8.71v4.38h-8.71zM17.32 129.88h17.37v4.38h-17.37zM38.96 129.88h26.03v4.38h-26.03zM69.27 129.88h17.37v4.38h-17.37zM95.25 129.88h4.38v4.38h-4.38zM108.24 129.88h4.38v4.38h-4.38zM116.89 129.88h8.71v4.38h-8.71zM0.00 134.21h17.37v4.38h-17.37zM21.65 134.21h8.71v4.38h-8.71zM34.64 134.21h4.38v4.38h-4.38zM43.29 134.21h13.04v4.38h-13.04zM64.94 134.21h8.71v4.38h-8.71zM77.93 134.21h4.38v4.38h-4.38zM95.25 134.21h4.38v4.38h-4.38zM103.91 134.21h4.38v4.38h-4.38zM116.89 134.21h13.04v4.38h-13.04zM0.00 138.54h4.38v4.38h-4.38zM8.66 138.54h13.04v4.38h-13.04zM25.98 138.54h17.37v4.38h-17.37zM56.28 138.54h30.36v4.38h-30.36zM90.92 138.54h4.38v4.38h-4.38zM112.56 138.54h13.04v4.38h-13.04zM129.88 138.54h17.37v4.38h-17.37zM4.33 142.87h17.37v4.38h-17.37zM25.98 142.87h17.37v4.38h-17.37zM51.95 142.87h4.38v4.38h-4.38zM60.61 142.87h4.38v4.38h-4.38zM86.59 142.87h4.38v4.38h-4.38zM112.56 142.87h13.04v4.38h-13.04zM129.88 142.87h8.71v4.38h-8.71zM142.87 142.87h4.38v4.38h-4.38z"/><path fill="#e6e6e6" d="M108.24 0.00h8.71v4.38h-8.71zM121.22 0.00h4.38v4.38h-4.38zM129.88 0.00h4.38v4.38h-4.38zM21.65 4.33h4.38v4.38h-4.38zM64.94 4.33h4.38v4.38h-4.38zM86.59 4.33h4.38v4.38h-4.38zM129.88 4.33h4.38v4.38h-4.38zM17.32 8.66h4.38v4.38h-4.38zM47.62 8.66h4.38v4.38h-4.38zM4.33 12.99h4.38v4.38h-4.38zM64.94 12.99h4.38v4.38h-4.38zM90.92 12.99h4.38v4.38h-4.38zM142.87 12.99h4.38v4.38h-4.38zM0.00 17.32h4.38v4.38h-4.38zM47.62 17.32h4.38v4.38h-4.38zM90.92 17.32h4.38v4.38h-4.38zM56.28 21.65h4.38v4.38h-4.38zM134.21 21.65h4.38v4.38h-4.38zM82.26 25.98h4.38v4.38h-4.38zM90.92 25.98h4.38v4.38h-4.38zM103.91 25.98h4.38v4.38h-4.38zM121.22 25.98h4.38v4.38h-4.38zM134.21 25.98h4.38v4.38h-4.38zM77.93 30.31h4.38v4.38h-4.38zM116.89 30.31h4.38v4.38h-4.38zM125.55 30.31h4.38v4.38h-4.38zM99.58 38.96h4.38v4.38h-4.38zM121.22 43.29h4.38v4.38h-4.38zM99.58 47.62h4.38v4.38h-4.38zM112.56 47.62h4.38v4.38h-4.38zM129.88 47.62h4.38v4.38h-4.38zM142.87 51.95h4.38v4.38h-4.38zM103.91 60.61h4.38v4.38h-4.38zM95.25 64.94h4.38v4.38h-4.38zM86.59 69.27h4.38v4.38h-4.38zM138.54 69.27h4.38v4.38h-4.38zM77.93 73.60h4.38v4.38h-4.38zM103.91 73.60h8.71v4.38h-8.71zM69.27 77.93h4.38v4.38h-4.38zM77.93 77.93h4.38v4.38h-4.38zM90.92 77.93h4.38v4.38h-4.38zM112.56 77.93h4.38v4.38h-4.38zM112.56 82.26h8.71v4.38h-8.71zM134.21 82.26h4.38v4.38h-4.38zM69.27 86.59h4.38v4.38h-4.38zM125.55 86.59h4.38v4.38h-4.38zM142.87 86.59h4.38v4.38h-4.38zM60.61 90.92h4.38v4.38h-4.38zM69.27 90.92h4.38v4.38h-4.38zM77.93 90.92h4.38v4.38h-4.38zM108.24 90.92h4.38v4.38h-4.38zM47.62 95.25h4.38v4.38h-4.38zM64.94 99.58h4.38v4.38h-4.38zM73.60 99.58h4.38v4.38h-4.38zM103.91 99.58h4.38v4.38h-4.38zM51.95 103.91h4.38v4.38h-4.38zM77.93 103.91h4.38v4.38h-4.38zM17.32 108.24h4.38v4.38h-4.38zM25.98 108.24h4.38v4.38h-4.38zM34.64 108.24h4.38v4.38h-4.38zM47.62 108.24h4.38v4.38h-4.38zM73.60 108.24h4.38v4.38h-4.38zM125.55 108.24h4.38v4.38h-4.38zM4.33 112.56h8.71v4.38h-8.71zM34.64 112.56h8.71v4.38h-8.71zM108.24 112.56h4.38v4.38h-4.38zM125.55 112.56h8.71v4.38h-8.71zM4.33 116.89h4.38v4.38h-4.38zM69.27 116.89h4.38v4.38h-4.38zM86.59 116.89h4.38v4.38h-4.38zM103.91 116.89h4.38v4.38h-4.38zM125.55 116.89h4.38v4.38h-4.38zM60.61 121.22h4.38v4.38h-4.38zM95.25 121.22h4.38v4.38h-4.38zM103.91 121.22h4.38v4.38h-4.38zM17.32 125.55h4.38v4.38h-4.38zM60.61 125.55h4.38v4.38h-4.38zM103.91 125.55h4.38v4.38h-4.38zM112.56 125.55h4.38v4.38h-4.38zM125.55 125.55h4.38v4.38h-4.38zM64.94 129.88h4.38v4.38h-4.38zM86.59 129.88h4.38v4.38h-4.38zM125.55 129.88h4.38v4.38h-4.38zM60.61 134.21h4.38v4.38h-4.38zM86.59 134.21h4.38v4.38h-4.38zM112.56 134.21h4.38v4.38h-4.38zM134.21 134.21h4.38v4.38h-4.38zM43.29 138.54h4.38v4.38h-4.38zM99.58 138.54h8.71v4.38h-8.71zM125.55 138.54h4.38v4.38h-4.38zM56.28 142.87h4.38v4.38h-4.38zM69.27 142.87h8.71v4.38h-8.71zM99.58 142.87h8.71v4.38h-8.71zM125.55 142.87h4.38v4.38h-4.38z"/><path fill="#ececec" d="M99.58 25.98h4.38v4.38h-4.38zM73.60 95.25h4.38v4.38h-4.38z"/></g>
<clipPath id="p1c"><rect x="70.0" y="533.0" width="148.4" height="147.2"/></clipPath>
<clipPath id="p2c"><rect x="255.6" y="533.0" width="147.8" height="147.2"/></clipPath>
<filter id="b3" x="-30%" y="-30%" width="160%" height="160%"><feGaussianBlur stdDeviation="3"/></filter>
<filter id="b5" x="-40%" y="-40%" width="180%" height="180%"><feGaussianBlur stdDeviation="5"/></filter>
<filter id="b8" x="-50%" y="-50%" width="200%" height="200%"><feGaussianBlur stdDeviation="8"/></filter>
<filter id="b2" x="-30%" y="-30%" width="160%" height="160%"><feGaussianBlur stdDeviation="1.6"/></filter>
<clipPath id="p3c"><rect x="440.7" y="533.0" width="147.9" height="147.2"/></clipPath>
</defs>
<rect width="1400" height="953" fill="#fff"/>
<g style="will-change:transform">
<text x="70.1" y="14.3" class="m">EW: 0.9</text>
<text x="124.59" y="14.3" class="s">±</text>
<text x="135.42" y="14.3" class="m">0.4</text>
<text x="158.48" y="14.3" class="i">Å</text>
<text x="167.52" y="14.3" class="m">  P(LAE)/P(OII): </text>
<text x="299.85" y="14.3" class="s">0.035</text>
<text x="340.57" y="9.3" class="s" style="font-size:9.05px;">0.107</text>
<text x="340.57" y="17.6" class="s" style="font-size:9.05px;">0.013</text>
<text x="367.28" y="14.3" class="m">  P(Ly</text>
<text x="414.89" y="14.3" class="i">α</text>
<text x="423.41" y="14.3" class="m">): 0.001  Q(z): </text>
<text x="547.96" y="14.3" class="s">0.00</text>
<text x="580.45" y="9.3" class="s" style="font-size:9.05px;">0.00</text>
<text x="580.45" y="17.6" class="s" style="font-size:9.05px;">0.00</text>
<text x="601.4" y="14.3" class="m">  z: </text>
<text x="640.33" y="14.3" class="s">0.1692</text>
<text x="689.27" y="9.3" class="s" style="font-size:9.05px;">0.1692</text>
<text x="689.27" y="17.6" class="s" style="font-size:9.05px;">0.1692</text>
<text x="721.74" y="14.3" class="m"> OII   Flags:0x00004029</text>
<text x="1057.0" y="16.8" class="m">2025-01-06 14:01:21  Version 1.22.3</text>
<text x="70.1" y="40.6" class="m">ID: 4020147479 (4020147479.pdf)</text>
<text x="70.1" y="55.1" class="m">Obs: 20220423v020_4020147479</text>
<text x="70.1" y="70.0" class="m">Primary Spec_Slot_IFU_AMP: 206_060_003_RU</text>
<text x="70.1" y="84.9" class="m">F=2.1&quot;  T=0.164  N=1.18  A=0.91  g=24.7</text>
<text x="70.1" y="99.4" class="m">RA,Dec (180.833252,53.654301)</text>
<text x="70.1" y="116.6" class="i">λ</text>
<text x="76.75" y="116.6" class="m"> = 4358.71</text>
<text x="155.69" y="116.6" class="i">Å</text>
<text x="165.04" y="116.6" class="m">  </text>
<text x="180.61" y="116.6" class="i">σ</text>
<text x="188.8" y="116.6" class="m"> = 7.70(</text>
<text x="251.08" y="116.6" class="s">±</text>
<text x="261.91" y="116.6" class="m">3.80)</text>
<text x="299.63" y="116.6" class="i">Å</text>
<text x="70.1" y="131.4" class="m">LineFlux = 2.00(</text>
<text x="194.65" y="131.4" class="s">±</text>
<text x="205.48" y="131.4" class="m">0.96)e-16</text>
<text x="70.1" y="146.3" class="m">Cont(n) = 5.30(</text>
<text x="186.86" y="146.3" class="s">±</text>
<text x="197.7" y="146.3" class="m">0.16)e-17</text>
<text x="70.1" y="164.3" class="m">Cont(w) = 6.50(</text>
<text x="186.86" y="164.3" class="s">±</text>
<text x="197.7" y="164.3" class="m">0.01)e-17 (gmag </text>
<text x="322.25" y="164.3" class="s">19.70</text>
<text x="362.96" y="159.3" class="s" style="font-size:9.05px;">19.70</text>
<text x="362.96" y="167.60000000000002" class="s" style="font-size:9.05px;">19.69</text>
<text x="389.68" y="164.3" class="m">)</text>
<text x="70.1" y="182.9" class="m">EWr = 1.10(</text>
<text x="155.73" y="182.9" class="s">±</text>
<text x="166.56" y="182.9" class="m">0.50) (w: 0.88(</text>
<text x="283.32" y="182.9" class="s">±</text>
<text x="294.16" y="182.9" class="m">0.42))</text>
<text x="341.46" y="182.9" class="i">Å</text>
<text x="70.1" y="200.3" class="m">S/N = 4.9(</text>
<text x="147.94" y="200.3" class="s">±</text>
<text x="158.78" y="200.3" class="m">0.9)  </text>
<text x="206.48" y="200.3" class="i">χ</text>
<text x="214.13" y="195.13" class="s" style="font-size:9.05px;">2</text>
<text x="219.39" y="200.3" class="m"> = 2.2(</text>
<text x="273.88" y="200.3" class="s">±</text>
<text x="284.72" y="200.3" class="m">0.2)</text>
<text x="70.1" y="218.0" class="m">P(LAE)/P(OII): </text>
<text x="186.86" y="218.0" class="s">0.031</text>
<text x="227.58" y="213.0" class="s" style="font-size:9.05px;">0.106</text>
<text x="227.58" y="221.3" class="s" style="font-size:9.05px;">0.011</text>
<text x="254.29" y="218.0" class="m"> (w: </text>
<text x="293.21" y="218.0" class="s">0.027</text>
<text x="333.93" y="213.0" class="s" style="font-size:9.05px;">0.095</text>
<text x="333.93" y="221.3" class="s" style="font-size:9.05px;">0.01</text>
<text x="360.64" y="218.0" class="m">)</text>
<text x="70.1" y="234.3" class="m">LyA z = 2.5854  OII z = 0.1692</text>
<text x="70.1" y="251.4" class="m">Q(0.00) NeIII(3967) z = 0.0986  EW r = 2.9</text>
<text x="397.64" y="251.4" class="i">Å</text>
<text x="70.1" y="498.75" class="m">MOSAIC/KPNO : Possible Matches = 0 (within +/- 3&quot;)  P(LAE)/P(OII): </text>
<text x="591.65" y="498.75" class="s">0.022</text>
<text x="632.36" y="493.75" class="s" style="font-size:9.05px;">0.072</text>
<text x="632.36" y="502.05" class="s" style="font-size:9.05px;">0.007</text>
<text x="659.07" y="498.75" class="m"> (g)</text>
<text x="70.1" y="888.0" class="m">No matching targets in catalog.</text>
<text x="70.1" y="902.9" class="m">Row intentionally blank.</text>
<text x="515.3" y="42.0" class="s" text-anchor="middle" style="font-size:7.5px;fill:#222;">2D Spec</text>
<text x="608.5" y="42.0" class="s" text-anchor="middle" style="font-size:7.5px;fill:#222;">Pixel Flat</text>
<text x="701.2" y="42.0" class="s" text-anchor="middle" style="font-size:7.5px;fill:#222;">Smoothed</text>
<rect x="467.3" y="47.0" width="281.0" height="37.6" fill="#fff" stroke="#000" stroke-width="2"/>
<rect x="471.8" y="48.0" width="86.8" height="35.6" fill="url(#vg1)" filter="url(#nf1)"/>
<rect x="543.2" y="60" width="1" height="23.6" fill="#fff" opacity=".85"/>
<rect x="657.9" y="48.0" width="86.8" height="35.6" fill="url(#vg2)" filter="url(#nf2)"/>
<text x="749.3" y="61.2" class="s" style="font-size:7.5px;fill:#111;">Weighted</text>
<text x="749.3" y="70.2" class="s" style="font-size:7.5px;fill:#111;">Sum</text>
<rect x="471.8" y="96.3" width="88.4" height="36.0" fill="url(#vg3)" filter="url(#nf3)"/>
<rect x="564.2" y="96.3" width="89.7" height="36.0" fill="url(#vg4)" filter="url(#nf4)"/>
<rect x="656.8" y="96.3" width="89.7" height="36.0" fill="url(#vg5)" filter="url(#nf5)"/>
<rect x="467.5" y="95.3" width="280.2" height="38.0" fill="none" stroke="#0000ff" stroke-width="1.8"/>
<text x="446.8" y="106.1" class="s" style="font-size:7.6px;fill:#111;">0.21</text>
<text x="446.8" y="114.8" class="s" style="font-size:7.6px;fill:#111;">1.87</text>
<text x="446.8" y="123.6" class="s" style="font-size:7.6px;fill:#111;">401</text>
<text x="750.5" y="99.9" class="s" style="font-size:5.5px;fill:#222;">0.52&quot;</text>
<text x="750.5" y="107.3" class="s" style="font-size:5.5px;fill:#222;">(439, 466)</text>
<text x="750.5" y="115.3" class="s" style="font-size:5.5px;fill:#222;">20220423</text>
<text x="750.5" y="122.3" class="s" style="font-size:5.5px;fill:#222;">v020_03</text>
<text x="750.5" y="128.9" class="s" style="font-size:5.5px;fill:#222;">206_RU_048</text>
<rect x="471.8" y="134.9" width="88.4" height="36.0" fill="url(#vg6)" filter="url(#nf6)"/>
<rect x="543.2" y="147.9" width="1" height="23.0" fill="#fff" opacity=".9"/>
<rect x="564.2" y="134.9" width="89.7" height="36.0" fill="url(#vg7)" filter="url(#nf7)"/>
<rect x="656.8" y="134.9" width="89.7" height="36.0" fill="url(#vg8)" filter="url(#nf8)"/>
<rect x="467.5" y="133.9" width="280.2" height="38.0" fill="none" stroke="#00ff00" stroke-width="1.8"/>
<text x="446.8" y="144.7" class="s" style="font-size:7.6px;fill:#111;">0.19</text>
<text x="446.8" y="153.5" class="s" style="font-size:7.6px;fill:#111;">0.89</text>
<text x="446.8" y="162.2" class="s" style="font-size:7.6px;fill:#111;">382</text>
<text x="750.5" y="138.5" class="s" style="font-size:5.5px;fill:#222;">0.98&quot;</text>
<text x="750.5" y="145.9" class="s" style="font-size:5.5px;fill:#222;">(438, 632)</text>
<text x="750.5" y="153.9" class="s" style="font-size:5.5px;fill:#222;">20220423</text>
<text x="750.5" y="160.9" class="s" style="font-size:5.5px;fill:#222;">v020_02</text>
<text x="750.5" y="167.5" class="s" style="font-size:5.5px;fill:#222;">206_RU_067</text>
<rect x="471.8" y="174.7" width="88.4" height="36.0" fill="url(#vg9)" filter="url(#nf9)"/>
<rect x="564.2" y="174.7" width="89.7" height="36.0" fill="url(#vg10)" filter="url(#nf10)"/>
<rect x="656.8" y="174.7" width="89.7" height="36.0" fill="url(#vg11)" filter="url(#nf11)"/>
<rect x="467.5" y="173.7" width="280.2" height="38.0" fill="none" stroke="#ffa500" stroke-width="1.8"/>
<text x="446.8" y="184.5" class="s" style="font-size:7.6px;fill:#111;">0.14</text>
<text x="446.8" y="193.2" class="s" style="font-size:7.6px;fill:#111;">1.71</text>
<text x="446.8" y="202.0" class="s" style="font-size:7.6px;fill:#111;">401</text>
<text x="750.5" y="178.3" class="s" style="font-size:5.5px;fill:#222;">1.22&quot;</text>
<text x="750.5" y="185.7" class="s" style="font-size:5.5px;fill:#222;">(439, 466)</text>
<text x="750.5" y="193.7" class="s" style="font-size:5.5px;fill:#222;">20220423</text>
<text x="750.5" y="200.7" class="s" style="font-size:5.5px;fill:#222;">v020_01</text>
<text x="750.5" y="207.3" class="s" style="font-size:5.5px;fill:#222;">206_RU_048</text>
<rect x="471.8" y="214.6" width="88.4" height="36.0" fill="url(#vg12)" filter="url(#nf12)"/>
<rect x="543.2" y="243.0" width="1" height="7.6" fill="#fff" opacity=".9"/>
<rect x="564.2" y="214.6" width="89.7" height="36.0" fill="url(#vg13)" filter="url(#nf13)"/>
<rect x="656.8" y="214.6" width="89.7" height="36.0" fill="url(#vg14)" filter="url(#nf14)"/>
<rect x="467.5" y="213.6" width="280.2" height="38.0" fill="none" stroke="#ff0000" stroke-width="1.8"/>
<text x="446.8" y="224.4" class="s" style="font-size:7.6px;fill:#111;">0.10</text>
<text x="446.8" y="233.2" class="s" style="font-size:7.6px;fill:#111;">1.54</text>
<text x="446.8" y="241.9" class="s" style="font-size:7.6px;fill:#111;">381</text>
<text x="750.5" y="218.2" class="s" style="font-size:5.5px;fill:#222;">1.34&quot;</text>
<text x="750.5" y="225.6" class="s" style="font-size:5.5px;fill:#222;">(438, 641)</text>
<text x="750.5" y="233.6" class="s" style="font-size:5.5px;fill:#222;">20220423</text>
<text x="750.5" y="240.6" class="s" style="font-size:5.5px;fill:#222;">v020_01</text>
<text x="750.5" y="247.2" class="s" style="font-size:5.5px;fill:#222;">206_RU_068</text>
<text x="865.3" y="47.6" class="s" text-anchor="middle" style="font-size:9.9px;fill:#111;">With Sky</text>
<text x="865.3" y="59.0" class="s" text-anchor="middle" style="font-size:9.9px;fill:#111;">x, y: 439, 466</text>
<text x="966.0" y="47.6" class="s" text-anchor="middle" style="font-size:9.9px;fill:#111;">Clean Image</text>
<text x="966.0" y="59.0" class="s" text-anchor="middle" style="font-size:9.9px;fill:#111;">x, y: 439, 466</text>
<g filter="url(#nf15)"><rect x="832.4" y="65.2" width="66.0" height="168.0" fill="url(#sky)"/><rect x="832.4" y="157.5" width="66.0" height="12" fill="#000" opacity=".45"/></g>
<rect x="831.5" y="64.2" width="67.7" height="169.8" fill="none" stroke="#0000ff" stroke-width="2.3"/>
<rect x="933.1" y="65.2" width="66.0" height="168.0" fill="url(#vg15)" filter="url(#nf16)"/>
<rect x="933.1" y="65.2" width="66.0" height="5.6" fill="#a0a0a0"/>
<rect x="932.2" y="64.2" width="67.7" height="169.8" fill="none" stroke="#0000ff" stroke-width="2.3"/>
<rect x="1048.1" y="60.3" width="251.6" height="150.8" fill="#fff" stroke="#000" stroke-width="1.05"/>
<path d="M1048.1 204.3H1299.7" stroke="#555" stroke-width="0.9"/>
<path d="M1044.3 204.3H1048.1" stroke="#000" stroke-width="1.05"/>
<text x="1041.5" y="207.5" class="s" text-anchor="end" style="font-size:8.7px;fill:#111;">0.0</text>
<path d="M1044.3 181.7H1048.1" stroke="#000" stroke-width="1.05"/>
<text x="1041.5" y="184.9" class="s" text-anchor="end" style="font-size:8.7px;fill:#111;">2.5</text>
<path d="M1044.3 159.1H1048.1" stroke="#000" stroke-width="1.05"/>
<text x="1041.5" y="162.3" class="s" text-anchor="end" style="font-size:8.7px;fill:#111;">5.0</text>
<path d="M1044.3 136.4H1048.1" stroke="#000" stroke-width="1.05"/>
<text x="1041.5" y="139.6" class="s" text-anchor="end" style="font-size:8.7px;fill:#111;">7.5</text>
<path d="M1044.3 113.8H1048.1" stroke="#000" stroke-width="1.05"/>
<text x="1041.5" y="117.0" class="s" text-anchor="end" style="font-size:8.7px;fill:#111;">10.0</text>
<path d="M1044.3 91.2H1048.1" stroke="#000" stroke-width="1.05"/>
<text x="1041.5" y="94.4" class="s" text-anchor="end" style="font-size:8.7px;fill:#111;">12.5</text>
<path d="M1044.3 68.6H1048.1" stroke="#000" stroke-width="1.05"/>
<text x="1041.5" y="71.8" class="s" text-anchor="end" style="font-size:8.7px;fill:#111;">15.0</text>
<path d="M1087.6 211.1V214.9" stroke="#000" stroke-width="1.05"/>
<text x="1087.6" y="224.7" class="s" text-anchor="middle" style="font-size:8.7px;fill:#111;">4320</text>
<path d="M1134.2 211.1V214.9" stroke="#000" stroke-width="1.05"/>
<text x="1134.2" y="224.7" class="s" text-anchor="middle" style="font-size:8.7px;fill:#111;">4340</text>
<path d="M1180.8 211.1V214.9" stroke="#000" stroke-width="1.05"/>
<text x="1180.8" y="224.7" class="s" text-anchor="middle" style="font-size:8.7px;fill:#111;">4360</text>
<path d="M1227.4 211.1V214.9" stroke="#000" stroke-width="1.05"/>
<text x="1227.4" y="224.7" class="s" text-anchor="middle" style="font-size:8.7px;fill:#111;">4380</text>
<path d="M1274.0 211.1V214.9" stroke="#000" stroke-width="1.05"/>
<text x="1274.0" y="224.7" class="s" text-anchor="middle" style="font-size:8.7px;fill:#111;">4400</text>
<text x="1050.0" y="71.6" class="s" style="font-size:8.7px;">e</text>
<text x="1055.35" y="68.12" class="s" style="font-size:6.09px;">−17</text>
<text x="1068.2" y="71.6" class="s" style="font-size:8.7px;">x2</text>
<text x="1078.89" y="71.6" class="i" style="font-size:8.7px;">Å</text>
<g clip-path="url(#gclip)"><path d="M1059.6 144.7V163.1M1064.3 125.4V143.8M1069.0 110.1V128.5M1073.6 92.2V110.6M1078.3 63.3V81.7M1082.9 57.6V76.0M1087.6 80.4V98.8M1092.3 101.9V120.3M1096.9 113.7V132.1M1101.6 107.3V125.7M1106.2 92.0V110.4M1110.9 76.1V94.5M1115.6 77.5V95.9M1120.2 72.5V90.9M1124.9 85.6V104.0M1129.5 97.4V115.8M1134.2 104.0V122.4M1138.9 91.1V109.5M1143.5 82.0V100.4M1148.2 81.5V99.9M1152.8 75.0V93.4M1157.5 80.2V98.6M1162.2 95.6V114.0M1166.8 78.8V97.2M1171.5 73.0V91.4M1176.1 67.8V86.2M1180.8 76.8V95.2M1185.5 81.1V99.5M1190.1 75.0V93.4M1194.8 77.5V95.9M1199.4 69.7V88.1M1204.1 80.8V99.2M1208.8 94.3V112.7M1213.4 95.6V114.0M1218.1 84.3V102.7M1222.7 85.2V103.6M1227.4 92.2V110.6M1232.1 109.8V128.2M1236.7 117.9V136.3M1241.4 111.0V129.4M1246.0 98.7V117.1M1250.7 99.7V118.1M1255.4 103.7V122.1M1260.0 81.1V99.5M1264.7 91.1V109.5M1269.3 68.4V86.8M1274.0 75.7V94.1M1278.7 101.2V119.6M1283.3 107.6V126.0M1288.0 94.7V113.1" stroke="#1872bc" stroke-width="1.5" fill="none"/><g fill="#1872bc"><circle cx="1059.6" cy="153.9" r="1.8"/><circle cx="1064.3" cy="134.6" r="1.8"/><circle cx="1069.0" cy="119.3" r="1.8"/><circle cx="1073.6" cy="101.4" r="1.8"/><circle cx="1078.3" cy="72.5" r="1.8"/><circle cx="1082.9" cy="66.8" r="1.8"/><circle cx="1087.6" cy="89.6" r="1.8"/><circle cx="1092.3" cy="111.1" r="1.8"/><circle cx="1096.9" cy="122.9" r="1.8"/><circle cx="1101.6" cy="116.5" r="1.8"/><circle cx="1106.2" cy="101.2" r="1.8"/><circle cx="1110.9" cy="85.3" r="1.8"/><circle cx="1115.6" cy="86.7" r="1.8"/><circle cx="1120.2" cy="81.7" r="1.8"/><circle cx="1124.9" cy="94.8" r="1.8"/><circle cx="1129.5" cy="106.6" r="1.8"/><circle cx="1134.2" cy="113.2" r="1.8"/><circle cx="1138.9" cy="100.3" r="1.8"/><circle cx="1143.5" cy="91.2" r="1.8"/><circle cx="1148.2" cy="90.7" r="1.8"/><circle cx="1152.8" cy="84.2" r="1.8"/><circle cx="1157.5" cy="89.4" r="1.8"/><circle cx="1162.2" cy="104.8" r="1.8"/><circle cx="1166.8" cy="88.0" r="1.8"/><circle cx="1171.5" cy="82.2" r="1.8"/><circle cx="1176.1" cy="77.0" r="1.8"/><circle cx="1180.8" cy="86.0" r="1.8"/><circle cx="1185.5" cy="90.3" r="1.8"/><circle cx="1190.1" cy="84.2" r="1.8"/><circle cx="1194.8" cy="86.7" r="1.8"/><circle cx="1199.4" cy="78.9" r="1.8"/><circle cx="1204.1" cy="90.0" r="1.8"/><circle cx="1208.8" cy="103.5" r="1.8"/><circle cx="1213.4" cy="104.8" r="1.8"/><circle cx="1218.1" cy="93.5" r="1.8"/><circle cx="1222.7" cy="94.4" r="1.8"/><circle cx="1227.4" cy="101.4" r="1.8"/><circle cx="1232.1" cy="119.0" r="1.8"/><circle cx="1236.7" cy="127.1" r="1.8"/><circle cx="1241.4" cy="120.2" r="1.8"/><circle cx="1246.0" cy="107.9" r="1.8"/><circle cx="1250.7" cy="108.9" r="1.8"/><circle cx="1255.4" cy="112.9" r="1.8"/><circle cx="1260.0" cy="90.3" r="1.8"/><circle cx="1264.7" cy="100.3" r="1.8"/><circle cx="1269.3" cy="77.6" r="1.8"/><circle cx="1274.0" cy="84.9" r="1.8"/><circle cx="1278.7" cy="110.4" r="1.8"/><circle cx="1283.3" cy="116.8" r="1.8"/><circle cx="1288.0" cy="103.9" r="1.8"/></g>
<path d="M1071.3 107.9 L1073.6 107.9 L1075.9 107.9 L1078.3 107.9 L1080.6 107.9 L1082.9 107.9 L1085.3 107.9 L1087.6 107.9 L1089.9 107.9 L1092.3 107.9 L1094.6 107.9 L1096.9 107.9 L1099.2 107.9 L1101.6 107.9 L1103.9 107.9 L1106.2 107.9 L1108.6 107.9 L1110.9 107.9 L1113.2 107.9 L1115.6 107.9 L1117.9 107.9 L1120.2 107.8 L1122.5 107.8 L1124.9 107.7 L1127.2 107.6 L1129.5 107.4 L1131.9 107.2 L1134.2 106.9 L1136.5 106.6 L1138.9 106.1 L1141.2 105.5 L1143.5 104.8 L1145.8 104.0 L1148.2 103.0 L1150.5 101.8 L1152.8 100.5 L1155.2 99.2 L1157.5 97.7 L1159.8 96.2 L1162.2 94.6 L1164.5 93.2 L1166.8 91.8 L1169.1 90.6 L1171.5 89.7 L1173.8 89.0 L1176.1 88.6 L1178.5 88.5 L1180.8 88.8 L1183.1 89.3 L1185.5 90.2 L1187.8 91.3 L1190.1 92.6 L1192.4 94.0 L1194.8 95.5 L1197.1 97.1 L1199.4 98.6 L1201.8 100.0 L1204.1 101.3 L1206.4 102.5 L1208.8 103.6 L1211.1 104.5 L1213.4 105.2 L1215.8 105.9 L1218.1 106.4 L1220.4 106.8 L1222.7 107.1 L1225.1 107.3 L1227.4 107.5 L1229.7 107.7 L1232.1 107.7 L1234.4 107.8 L1236.7 107.9 L1239.0 107.9 L1241.4 107.9 L1243.7 107.9 L1246.0 107.9 L1248.4 107.9 L1250.7 107.9 L1253.0 107.9 L1255.4 107.9 L1257.7 107.9 L1260.0 107.9 L1262.3 107.9 L1264.7 107.9 L1267.0 107.9 L1269.3 107.9 L1271.7 107.9 L1274.0 107.9 L1276.3 107.9 L1278.7 107.9 L1281.0 107.9 L1283.3 107.9 L1285.6 107.9 L1288.0 107.9" stroke="#333" stroke-width="1.5" fill="none"/></g>
<rect x="101.5" y="348.25" width="1198.0" height="84.25" fill="#fff"/>
<g clip-path="url(#sclip)">
<rect x="591.25" y="348.25" width="54.5" height="84.25" fill="#c4c400"/>
<path d="M101.5 404.2 L108.0 403.6 L114.0 404.8 L124.9 404.4 L124.9 433.1 L114.0 432.8 L108.0 433.9 L101.5 433.2Z" fill="#808080" fill-opacity="0.45"/>
<path d="M144.5 405.8 L150.0 406.4 L156.0 407.4 L165.0 408.6 L172.0 409.1 L180.0 409.1 L188.9 408.6 L188.9 428.1 L180.0 427.6 L172.0 427.6 L165.0 428.1 L156.0 429.2 L150.0 430.2 L144.5 430.7Z" fill="#808080" fill-opacity="0.45"/>
<path d="M195.4 408.9 L205.0 409.6 L218.0 410.9 L232.0 411.4 L245.0 410.6 L252.0 410.1 L262.0 411.1 L275.0 412.9 L290.0 413.6 L320.0 413.4 L350.0 413.8 L390.0 413.9 L412.0 413.1 L420.0 413.6 L432.0 412.9 L450.0 413.8 L480.0 414.1 L503.9 413.9 L503.9 423.6 L480.0 423.4 L450.0 423.8 L432.0 424.6 L420.0 423.9 L412.0 424.4 L390.0 423.6 L350.0 423.8 L320.0 424.1 L290.0 423.9 L275.0 424.6 L262.0 426.4 L252.0 427.4 L245.0 426.9 L232.0 426.1 L218.0 426.6 L205.0 427.9 L195.4 428.6Z" fill="#808080" fill-opacity="0.45"/>
<path d="M509.1 414.1 L560.0 414.4 L600.0 414.6 L650.0 414.4 L700.0 414.8 L760.0 414.9 L850.0 415.2 L900.0 415.4 L925.0 415.4 L930.0 414.4 L935.0 414.8 L938.1 415.4 L938.1 422.1 L935.0 422.8 L930.0 423.1 L925.0 422.1 L900.0 422.1 L850.0 422.2 L760.0 422.6 L700.0 422.8 L650.0 423.1 L600.0 422.9 L560.0 423.1 L509.1 423.4Z" fill="#808080" fill-opacity="0.45"/>
<path d="M940.0 415.4 L1000.0 415.6 L1100.0 415.6 L1120.0 415.1 L1140.0 415.6 L1230.0 415.4 L1270.0 415.6 L1285.0 416.1 L1296.0 417.8 L1299.5 418.4 L1299.5 419.1 L1296.0 419.8 L1285.0 421.4 L1270.0 421.9 L1230.0 422.1 L1140.0 421.9 L1120.0 422.4 L1100.0 421.9 L1000.0 421.9 L940.0 422.1Z" fill="#808080" fill-opacity="0.45"/>
<path d="M101.5 418.75H1299.5" stroke="#484848" stroke-width="1.1" opacity="0.7"/>
<rect x="132" y="348.25" width="4.8" height="84.25" fill="#707070" fill-opacity="0.45"/>
<rect x="132.0" y="348.25" width="12.5" height="84.25" fill="#808080" fill-opacity="0.7" stroke="#222" stroke-width="1"/>
<path d="M132.0 364.1L144.5 353.9M132.0 387.2L144.5 377.0M132.0 410.3L144.5 400.1M132.0 433.4L144.5 423.2" stroke="#222" stroke-width="0.85" fill="none"/>
<rect x="1266.25" y="348.25" width="6.25" height="84.25" fill="#808080" fill-opacity="0.7" stroke="#222" stroke-width="1"/>
<path d="M1266.25 352.3L1272.5 347.2M1266.25 375.4L1272.5 370.3M1266.25 398.4L1272.5 393.3M1266.25 421.5L1272.5 416.4M1266.25 444.6L1272.5 439.5" stroke="#222" stroke-width="0.85" fill="none"/>
<path d="M273.25 348.25V432.5" stroke="#555" stroke-width="1.1" stroke-dasharray="4 1.75"/>
<path d="M420.75 348.25V432.5" stroke="#555" stroke-width="1.1" stroke-dasharray="4 1.75"/>
<path d="M458.75 348.25V432.5" stroke="#555" stroke-width="1.1" stroke-dasharray="4 1.75"/>
<path d="M618.3 348.25V432.5" stroke="#111" stroke-width="0.8" stroke-dasharray="2.8 1.4"/>
<path d="M101.6 410.2 L104.8 406.4 L105.9 428.9 L109.6 389.8 L111.6 428.9 L113.9 398.9 L115.0 401.6 L117.7 387.1 L119.1 404.3 L119.8 408.6 L120.9 405.4 L122.5 408.6 L123.8 415.0 L124.9 408.6 L126.8 410.2 L128.4 410.2 L129.8 390.4 L131.1 389.8 L133.2 397.9 L135.1 410.2 L137.0 367.3 L137.7 367.9 L139.1 385.0 L141.2 393.6 L143.7 409.6 L145.0 395.7 L146.9 390.4 L148.2 395.7 L149.8 410.7 L151.2 400.0 L152.7 408.6 L154.1 403.2 L155.7 409.6 L157.9 415.5 L159.5 407.5 L161.1 409.6 L162.4 403.8 L164.8 416.1 L167.3 382.3 L168.6 404.3 L170.2 401.1 L172.0 393.0 L173.4 396.8 L174.5 404.3 L175.9 403.2 L177.4 406.4 L178.8 401.1 L179.3 413.9 L180.4 402.1 L182.5 396.8 L184.6 395.7 L186.0 382.3 L187.9 394.6 L191.1 393.0 L194.3 391.4 L196.4 395.7 L197.7 404.8 L199.6 387.1 L201.0 382.3 L203.1 398.9 L204.8 388.2 L206.3 395.7 L208.2 391.4 L210.9 382.9 L212.0 394.6 L213.4 382.9 L215.2 390.4 L216.2 387.1 L217.9 395.7 L219.5 397.9 L221.6 405.4 L224.1 384.5 L226.4 398.9 L228.0 394.6 L230.7 389.3 L232.3 398.4 L234.5 394.6 L236.9 383.9 L239.3 394.6 L242.0 410.7 L243.6 399.5 L245.7 401.6 L247.6 415.0 L248.7 423.6 L249.6 409.6 L250.9 403.2 L251.9 404.3 L253.2 394.6 L254.3 398.4 L255.4 396.2 L257.5 404.3 L259.1 407.0 L260.7 392.5 L262.6 385.5 L264.5 397.9 L266.6 409.1 L267.7 409.1 L269.8 391.4 L271.4 388.2 L272.8 381.2 L274.1 387.1 L275.7 394.6 L278.1 386.1 L280.5 399.5 L282.1 396.8 L284.3 401.1 L286.2 407.5 L288.8 394.1 L289.6 395.7 L290.9 389.8 L292.9 397.9 L294.8 392.0 L296.1 393.6 L297.7 401.1 L299.5 407.5 L301.4 403.2 L302.7 400.0 L304.1 402.1 L305.7 412.9 L306.6 425.7 L307.6 408.6 L308.7 413.9 L310.5 407.5 L313.2 404.3 L315.6 399.5 L318.0 405.9 L319.4 399.5 L320.7 401.1 L322.0 408.0 L323.4 407.0 L325.2 409.1 L327.1 401.1 L328.8 392.5 L330.1 396.2 L331.4 395.2 L333.6 399.5 L336.2 402.7 L338.1 400.0 L339.5 405.4 L341.6 396.8 L343.2 391.4 L344.3 390.4 L346.4 396.2 L348.6 398.9 L350.7 401.1 L352.3 399.5 L353.7 385.5 L355.5 388.2 L357.1 388.2 L358.4 403.2 L359.5 405.4 L360.4 404.3 L362.0 401.1 L363.0 408.6 L364.4 418.8 L365.7 413.9 L367.9 408.6 L369.5 409.6 L370.9 408.0 L371.6 410.7 L373.2 403.2 L374.8 401.6 L376.2 385.5 L377.5 394.6 L379.1 390.4 L380.2 391.4 L382.3 401.1 L383.4 402.1 L385.0 407.0 L386.6 412.9 L388.2 408.0 L389.3 407.5 L392.0 400.5 L392.7 404.3 L394.1 392.5 L394.9 395.2 L397.3 377.5 L398.4 385.5 L399.6 386.1 L400.2 377.5 L401.3 378.6 L402.1 387.1 L404.1 379.1 L405.4 386.1 L407.5 384.5 L410.4 392.5 L412.6 379.1 L414.8 372.7 L416.9 377.0 L418.4 376.4 L419.8 379.1 L422.0 376.4 L423.4 384.5 L425.7 389.8 L428.1 373.8 L430.5 385.5 L432.1 385.0 L434.1 389.8 L436.2 384.5 L438.0 382.9 L440.2 387.1 L442.6 392.5 L445.5 388.2 L447.7 387.7 L449.8 387.7 L451.4 382.3 L452.7 387.7 L454.6 375.4 L456.2 373.8 L457.3 375.4 L458.7 367.9 L460.2 372.1 L461.6 372.7 L463.2 381.8 L464.8 385.5 L467.0 383.9 L468.0 386.6 L469.6 377.0 L472.0 377.5 L475.0 373.8 L477.1 380.2 L479.8 375.4 L482.0 378.0 L484.6 393.0 L487.6 378.0 L489.5 380.7 L491.1 386.6 L492.7 377.5 L494.8 385.0 L497.0 380.7 L499.1 380.2 L501.2 370.0 L503.4 379.1 L505.5 378.6 L507.7 380.7 L509.5 381.2 L511.4 377.0 L513.0 388.2 L513.8 380.7 L515.7 385.5 L517.9 381.8 L520.0 375.4 L521.6 374.3 L524.3 383.9 L526.4 383.4 L528.6 364.6 L530.2 377.0 L530.9 371.1 L532.6 382.9 L534.5 374.3 L536.1 379.1 L539.3 394.1 L543.6 379.1 L545.7 383.9 L548.4 382.9 L549.6 374.8 L550.2 374.3 L552.1 381.2 L553.8 384.5 L555.4 382.9 L557.7 387.1 L559.6 377.5 L560.7 377.0 L562.3 382.3 L563.7 376.4 L565.5 388.8 L567.4 398.4 L569.8 379.1 L572.0 375.9 L574.1 379.1 L575.7 386.6 L578.1 382.3 L579.5 382.3 L581.1 379.1 L582.1 384.5 L584.1 393.0 L585.9 389.8 L588.8 397.9 L591.2 377.5 L592.9 364.1 L594.5 362.0 L596.1 372.1 L598.0 384.5 L600.4 372.1 L602.5 368.4 L603.6 368.4 L607.3 380.7 L610.0 372.1 L612.7 368.9 L614.3 377.0 L615.9 368.9 L617.7 365.7 L619.6 369.5 L621.8 368.4 L623.7 367.3 L625.0 371.1 L626.6 377.0 L628.8 373.2 L630.4 373.8 L633.6 386.6 L635.7 379.6 L637.3 380.7 L639.5 372.1 L640.5 374.3 L641.9 366.2 L643.2 370.0 L644.8 381.8 L645.9 381.2 L647.7 364.6 L651.2 378.0 L654.5 362.5 L658.2 381.2 L660.9 367.3 L663.6 373.8 L666.2 364.6 L667.6 362.0 L668.7 365.2 L670.2 360.4 L672.1 365.7 L673.8 371.6 L674.8 370.0 L677.0 380.7 L680.2 368.9 L681.8 365.7 L683.1 371.6 L685.5 363.6 L687.7 361.4 L690.1 370.5 L692.5 362.5 L694.1 365.7 L697.3 356.1 L699.5 366.2 L700.2 369.5 L701.3 367.3 L702.7 357.7 L704.3 352.3 L705.9 360.4 L707.5 358.2 L709.1 361.4 L710.7 360.9 L712.9 356.6 L715.0 363.0 L717.1 368.4 L719.5 377.0 L721.4 369.5 L723.0 368.4 L725.2 360.9 L726.8 361.4 L728.9 366.2 L730.9 360.9 L732.7 365.7 L734.3 360.4 L736.4 359.8 L737.5 357.7 L740.2 364.6 L742.3 360.4 L744.1 364.1 L746.3 353.4 L747.7 357.7 L749.3 365.7 L751.4 359.3 L753.0 362.5 L755.7 360.4 L758.4 366.2 L760.0 363.0 L762.1 360.9 L763.8 362.5 L764.8 358.2 L765.6 363.0 L766.6 358.8 L767.7 366.2 L769.1 358.8 L770.2 357.1 L771.2 362.5 L773.9 360.4 L776.3 359.8 L778.8 353.4 L780.4 355.0 L782.5 359.8 L784.6 362.5 L786.2 360.4 L787.9 359.8 L789.5 364.1 L791.6 361.4 L793.2 362.5 L794.1 357.7 L795.4 360.9 L797.0 359.8 L798.6 364.1 L800.2 367.3 L802.9 365.7 L804.5 358.8 L805.5 359.8 L806.6 357.7 L808.8 367.3 L810.4 364.1 L812.0 357.7 L813.6 356.6 L815.7 365.2 L818.4 353.4 L820.0 364.1 L821.6 368.4 L823.8 360.9 L825.9 364.6 L828.0 362.0 L830.5 356.1 L832.9 360.4 L834.8 361.4 L838.2 367.3 L840.4 364.1 L842.5 359.3 L844.6 356.1 L847.3 361.4 L849.6 364.1 L850.2 357.1 L851.6 362.0 L853.0 365.7 L854.8 361.4 L857.0 363.0 L858.6 362.0 L860.2 366.2 L862.3 363.6 L863.9 364.1 L865.9 356.6 L867.7 363.0 L869.3 367.3 L870.9 359.8 L872.0 367.3 L874.1 358.2 L875.7 360.9 L877.6 366.2 L879.5 360.4 L881.1 357.7 L882.7 363.6 L884.3 362.0 L885.9 358.2 L887.5 359.3 L889.6 354.5 L891.2 358.8 L892.9 364.1 L895.5 357.1 L898.0 365.2 L899.8 361.4 L901.4 360.9 L903.0 358.8 L904.1 359.8 L905.7 356.6 L907.3 359.8 L908.9 358.2 L911.1 358.8 L912.7 364.6 L914.3 371.1 L915.9 367.9 L917.5 363.6 L919.6 369.5 L921.6 374.3 L923.4 363.0 L925.0 366.8 L926.6 365.7 L928.8 362.5 L930.4 363.0 L932.0 366.8 L933.6 360.9 L935.5 357.1 L937.3 361.4 L940.0 362.5 L941.6 360.9 L943.8 360.9 L945.9 353.4 L947.0 365.2 L948.6 373.8 L950.7 366.2 L953.4 365.2 L955.5 359.8 L957.1 359.8 L959.8 365.7 L963.0 358.2 L965.2 365.7 L967.3 353.4 L968.9 359.8 L970.9 372.1 L973.2 362.0 L974.8 361.4 L977.0 366.8 L978.6 360.9 L980.2 359.8 L981.6 356.1 L983.9 365.7 L986.6 368.9 L989.3 367.9 L992.0 365.2 L993.6 360.4 L995.2 364.1 L996.8 363.0 L998.9 371.1 L1000.2 371.6 L1002.1 367.9 L1004.8 371.6 L1005.9 366.8 L1007.5 371.6 L1009.6 364.1 L1011.2 362.0 L1012.9 366.2 L1014.8 358.8 L1016.6 367.9 L1019.1 374.3 L1020.9 370.0 L1023.0 360.4 L1025.7 372.1 L1028.1 365.7 L1030.0 362.5 L1032.1 367.3 L1034.3 364.6 L1037.0 369.5 L1039.1 362.5 L1040.5 361.4 L1042.3 369.5 L1044.1 376.4 L1046.3 368.9 L1048.8 362.0 L1050.4 366.2 L1051.4 365.7 L1053.6 372.1 L1055.2 368.4 L1056.8 369.5 L1058.4 368.9 L1060.0 370.5 L1062.1 373.8 L1064.3 366.2 L1065.6 364.6 L1067.3 368.4 L1069.1 375.4 L1070.7 370.5 L1072.3 373.2 L1075.0 368.9 L1078.8 374.8 L1080.9 368.9 L1082.5 367.3 L1084.6 371.1 L1087.9 375.9 L1089.5 368.4 L1091.1 366.8 L1092.7 371.6 L1094.8 381.2 L1097.3 390.9 L1099.1 382.9 L1101.0 377.5 L1102.9 385.0 L1104.5 391.4 L1106.1 385.0 L1108.0 368.9 L1110.4 368.9 L1112.0 369.5 L1113.8 365.7 L1115.7 371.1 L1117.6 378.0 L1119.5 375.4 L1121.1 368.9 L1122.7 367.9 L1124.3 365.2 L1125.4 366.8 L1127.0 359.8 L1128.6 367.9 L1130.2 376.4 L1132.3 366.2 L1133.9 368.4 L1136.1 363.6 L1138.2 356.6 L1140.4 363.6 L1142.0 356.1 L1143.6 362.0 L1145.2 360.9 L1147.3 366.2 L1148.4 357.1 L1149.6 358.8 L1150.2 358.8 L1151.3 362.5 L1153.2 374.3 L1155.4 377.5 L1157.0 373.8 L1159.1 363.0 L1160.7 357.1 L1162.3 367.9 L1163.9 365.2 L1166.1 359.8 L1168.2 357.7 L1170.4 360.4 L1172.5 364.6 L1174.6 357.1 L1176.2 359.8 L1178.9 357.7 L1181.1 352.9 L1182.1 359.3 L1184.3 355.0 L1186.4 362.0 L1189.1 375.4 L1191.2 367.9 L1193.4 360.9 L1195.0 362.0 L1197.1 359.3 L1198.8 362.0 L1202.5 362.0 L1203.8 355.5 L1205.2 358.2 L1206.8 359.3 L1208.4 358.2 L1209.5 361.4 L1210.5 356.6 L1211.9 361.4 L1213.2 359.8 L1214.8 368.9 L1217.0 360.9 L1218.6 360.4 L1220.2 356.1 L1221.6 358.2 L1222.9 356.6 L1224.7 352.3 L1226.1 358.2 L1226.9 356.6 L1229.3 365.2 L1230.6 368.4 L1233.0 357.7 L1234.1 363.6 L1235.4 377.0 L1236.8 365.2 L1239.5 362.0 L1242.1 357.7 L1243.8 359.8 L1245.9 357.7 L1247.5 359.3 L1249.6 366.2 L1252.3 365.2 L1254.5 359.8 L1256.3 355.5 L1258.2 362.5 L1259.8 359.8 L1262.5 364.1 L1265.2 360.9 L1266.2 356.1 L1268.4 361.4 L1270.0 358.8 L1272.1 363.0 L1273.8 358.2 L1275.9 362.0 L1278.0 365.7 L1280.2 358.8 L1281.2 357.7 L1283.4 362.5 L1285.2 357.1 L1286.9 358.2 L1288.4 355.0 L1290.4 358.2 L1292.0 363.0 L1294.6 353.9 L1296.2 356.6 L1297.6 362.0 L1299.1 359.8" stroke="#0000ff" stroke-width="1.2" fill="none" stroke-linejoin="round"/>
</g>
<rect x="101.5" y="348.25" width="1198.0" height="84.25" fill="none" stroke="#000" stroke-width="1.05"/>
<path d="M111.75 432.5V436.3" stroke="#000" stroke-width="1.05"/>
<text x="111.8" y="446.5" class="s" text-anchor="middle" style="font-size:9.4px;fill:#111;">3500</text>
<path d="M170.75 432.5V436.3" stroke="#000" stroke-width="1.05"/>
<text x="170.8" y="446.5" class="s" text-anchor="middle" style="font-size:9.4px;fill:#111;">3600</text>
<path d="M229.75 432.5V436.3" stroke="#000" stroke-width="1.05"/>
<text x="229.8" y="446.5" class="s" text-anchor="middle" style="font-size:9.4px;fill:#111;">3700</text>
<path d="M288.75 432.5V436.3" stroke="#000" stroke-width="1.05"/>
<text x="288.8" y="446.5" class="s" text-anchor="middle" style="font-size:9.4px;fill:#111;">3800</text>
<path d="M347.75 432.5V436.3" stroke="#000" stroke-width="1.05"/>
<text x="347.8" y="446.5" class="s" text-anchor="middle" style="font-size:9.4px;fill:#111;">3900</text>
<path d="M406.75 432.5V436.3" stroke="#000" stroke-width="1.05"/>
<text x="406.8" y="446.5" class="s" text-anchor="middle" style="font-size:9.4px;fill:#111;">4000</text>
<path d="M465.75 432.5V436.3" stroke="#000" stroke-width="1.05"/>
<text x="465.8" y="446.5" class="s" text-anchor="middle" style="font-size:9.4px;fill:#111;">4100</text>
<path d="M524.75 432.5V436.3" stroke="#000" stroke-width="1.05"/>
<text x="524.8" y="446.5" class="s" text-anchor="middle" style="font-size:9.4px;fill:#111;">4200</text>
<path d="M583.75 432.5V436.3" stroke="#000" stroke-width="1.05"/>
<text x="583.8" y="446.5" class="s" text-anchor="middle" style="font-size:9.4px;fill:#111;">4300</text>
<path d="M642.75 432.5V436.3" stroke="#000" stroke-width="1.05"/>
<text x="642.8" y="446.5" class="s" text-anchor="middle" style="font-size:9.4px;fill:#111;">4400</text>
<path d="M701.75 432.5V436.3" stroke="#000" stroke-width="1.05"/>
<text x="701.8" y="446.5" class="s" text-anchor="middle" style="font-size:9.4px;fill:#111;">4500</text>
<path d="M760.75 432.5V436.3" stroke="#000" stroke-width="1.05"/>
<text x="760.8" y="446.5" class="s" text-anchor="middle" style="font-size:9.4px;fill:#111;">4600</text>
<path d="M819.75 432.5V436.3" stroke="#000" stroke-width="1.05"/>
<text x="819.8" y="446.5" class="s" text-anchor="middle" style="font-size:9.4px;fill:#111;">4700</text>
<path d="M878.75 432.5V436.3" stroke="#000" stroke-width="1.05"/>
<text x="878.8" y="446.5" class="s" text-anchor="middle" style="font-size:9.4px;fill:#111;">4800</text>
<path d="M937.75 432.5V436.3" stroke="#000" stroke-width="1.05"/>
<text x="937.8" y="446.5" class="s" text-anchor="middle" style="font-size:9.4px;fill:#111;">4900</text>
<path d="M996.75 432.5V436.3" stroke="#000" stroke-width="1.05"/>
<text x="996.8" y="446.5" class="s" text-anchor="middle" style="font-size:9.4px;fill:#111;">5000</text>
<path d="M1055.75 432.5V436.3" stroke="#000" stroke-width="1.05"/>
<text x="1055.8" y="446.5" class="s" text-anchor="middle" style="font-size:9.4px;fill:#111;">5100</text>
<path d="M1114.75 432.5V436.3" stroke="#000" stroke-width="1.05"/>
<text x="1114.8" y="446.5" class="s" text-anchor="middle" style="font-size:9.4px;fill:#111;">5200</text>
<path d="M1173.75 432.5V436.3" stroke="#000" stroke-width="1.05"/>
<text x="1173.8" y="446.5" class="s" text-anchor="middle" style="font-size:9.4px;fill:#111;">5300</text>
<path d="M1232.75 432.5V436.3" stroke="#000" stroke-width="1.05"/>
<text x="1232.8" y="446.5" class="s" text-anchor="middle" style="font-size:9.4px;fill:#111;">5400</text>
<path d="M1291.75 432.5V436.3" stroke="#000" stroke-width="1.05"/>
<text x="1291.8" y="446.5" class="s" text-anchor="middle" style="font-size:9.4px;fill:#111;">5500</text>
<path d="M97.7 418.75H101.5" stroke="#000" stroke-width="1.05"/>
<text x="94.9" y="422.2" class="s" text-anchor="end" style="font-size:9.4px;fill:#111;">0</text>
<path d="M97.7 380.75H101.5" stroke="#000" stroke-width="1.05"/>
<text x="94.9" y="384.2" class="s" text-anchor="end" style="font-size:9.4px;fill:#111;">10</text>
<text x="111.3" y="346.2" class="s" style="font-size:9.9px;">e</text>
<text x="117.39" y="342.24" class="s" style="font-size:6.93px;">−17</text>
<text x="132.02" y="346.2" class="s" style="font-size:9.9px;">x2</text>
<text x="144.17" y="346.2" class="i" style="font-size:9.9px;">Å</text>
<text transform="translate(103.5 349.3) rotate(90)" text-anchor="end" class="s" style="font-size:9.4px;fill:#8a2be2">NV    {</text>
<text transform="translate(132.2 349.3) rotate(90)" text-anchor="end" class="s" style="font-size:9.4px;fill:#800080">CIV   {</text>
<text transform="translate(142.1 349.3) rotate(90)" text-anchor="end" class="s" style="font-size:9.4px;fill:#8a2be2">SiII  {</text>
<text transform="translate(180.0 349.3) rotate(90)" text-anchor="end" class="s" style="font-size:9.4px;fill:#ff00ff">CII   {</text>
<text transform="translate(233.1 349.3) rotate(90)" text-anchor="end" class="s" style="font-size:9.4px;fill:#ff0000">OVI   {</text>
<text transform="translate(254.4 349.3) rotate(90)" text-anchor="end" class="s" style="font-size:9.4px;fill:#800080">HeII  {</text>
<text transform="translate(364.3 349.3) rotate(90)" text-anchor="end" class="s" style="font-size:9.4px;fill:#8a2be2">SiIV  {</text>
<text transform="translate(235.3 306.0) rotate(90)" text-anchor="end" class="s" style="font-size:9.4px;fill:#ffa500">SiIV  [</text>
<text transform="translate(252.8 306.0) rotate(90)" text-anchor="end" class="s" style="font-size:9.4px;fill:#4169e1">OII   {</text>
<text transform="translate(459.9 349.3) rotate(90)" text-anchor="end" class="s" style="font-size:9.4px;fill:#87ceeb">OII   {</text>
<text transform="translate(472.8 349.3) rotate(90)" text-anchor="end" class="s" style="font-size:9.4px;fill:#ffa500">CIV   {</text>
<text transform="translate(481.8 349.3) rotate(90)" text-anchor="end" class="s" style="font-size:9.4px;fill:#87ceeb">OII   {</text>
<text transform="translate(669.5 349.3) rotate(90)" text-anchor="end" class="s" style="font-size:9.4px;fill:#ff0000">NV    {</text>
<text transform="translate(717.1 349.3) rotate(90)" text-anchor="end" class="s" style="font-size:9.4px;fill:#ff0000">SiII  {</text>
<text transform="translate(767.0 349.3) rotate(90)" text-anchor="end" class="s" style="font-size:9.4px;fill:#8a2be2">HeII  {</text>
<text transform="translate(856.8 349.3) rotate(90)" text-anchor="end" class="s" style="font-size:9.4px;fill:#87ceeb">H<tspan font-style="italic">γ</tspan> {</text>
<text transform="translate(881.3 349.3) rotate(90)" text-anchor="end" class="s" style="font-size:9.4px;fill:#87ceeb">H<tspan font-style="italic">γ</tspan> {</text>
<text transform="translate(925.0 349.3) rotate(90)" text-anchor="end" class="s" style="font-size:9.4px;fill:#4169e1">H<tspan font-style="italic">β</tspan> {</text>
<text transform="translate(982.7 349.3) rotate(90)" text-anchor="end" class="s" style="font-size:9.4px;fill:#4169e1">OIII  {</text>
<text transform="translate(1001.3 349.3) rotate(90)" text-anchor="end" class="s" style="font-size:9.4px;fill:#ff0000">SiIV  {</text>
<text transform="translate(1011.0 349.3) rotate(90)" text-anchor="end" class="s" style="font-size:9.4px;fill:#4169e1">OIII  {</text>
<text transform="translate(1037.5 349.3) rotate(90)" text-anchor="end" class="s" style="font-size:9.4px;fill:#008000">H<tspan font-style="italic">γ</tspan> {</text>
<text transform="translate(1036.8 306.0) rotate(90)" text-anchor="end" class="s" style="font-size:9.4px;fill:#ffa500">CIII  {</text>
<text transform="translate(1175.5 349.3) rotate(90)" text-anchor="end" class="s" style="font-size:9.4px;fill:#800080">CII   {</text>
<text transform="translate(1194.5 349.3) rotate(90)" text-anchor="end" class="s" style="font-size:9.4px;fill:#87ceeb">H<tspan font-style="italic">β</tspan> {</text>
<text transform="translate(1212.8 349.3) rotate(90)" text-anchor="end" class="s" style="font-size:9.4px;fill:#9400d3">CIII  {</text>
<text transform="translate(1223.0 349.3) rotate(90)" text-anchor="end" class="s" style="font-size:9.4px;fill:#87ceeb">H<tspan font-style="italic">β</tspan> {</text>
<text transform="translate(1257.9 349.3) rotate(90)" text-anchor="end" class="s" style="font-size:9.4px;fill:#87ceeb">OIII  {</text>
<text transform="translate(1286.8 349.3) rotate(90)" text-anchor="end" class="s" style="font-size:9.4px;fill:#87ceeb">OIII  {</text>
<text transform="translate(1289.1 306.0) rotate(90)" text-anchor="end" class="s" style="font-size:9.4px;fill:#87ceeb">OIII  (</text>
<rect x="454.5" y="450.0" width="17.2" height="6.2" fill="#ff0000"/>
<text x="478.1" y="456.6" class="s" style="font-size:8px;fill:#222">Ly<tspan font-style="italic">α</tspan></text>
<rect x="508.25" y="450.0" width="17.2" height="6.2" fill="#008000"/>
<text x="531.9" y="456.6" class="s" style="font-size:8px;fill:#222">OII</text>
<rect x="561.75" y="450.0" width="17.2" height="6.2" fill="#8a2be2"/>
<text x="585.4" y="456.6" class="s" style="font-size:8px;fill:#222">CIV</text>
<rect x="616.25" y="450.0" width="17.2" height="6.2" fill="#800080"/>
<text x="639.9" y="456.6" class="s" style="font-size:8px;fill:#222">CIII</text>
<rect x="668.0" y="450.0" width="17.2" height="6.2" fill="#ff00ff"/>
<text x="691.6" y="456.6" class="s" style="font-size:8px;fill:#222">MgII</text>
<rect x="723.75" y="450.0" width="17.2" height="6.2" fill="#4169e1"/>
<text x="747.4" y="456.6" class="s" style="font-size:8px;fill:#222">H<tspan font-style="italic">γ</tspan></text>
<rect x="774.25" y="450.0" width="17.2" height="6.2" fill="#ffa500"/>
<text x="797.9" y="456.6" class="s" style="font-size:8px;fill:#222">HeII</text>
<rect x="828.75" y="450.0" width="17.2" height="6.2" fill="#87ceeb"/>
<text x="852.4" y="456.6" class="s" style="font-size:8px;fill:#222">(K)CaII</text>
<rect x="895.0" y="450.0" width="17.2" height="6.2" fill="#87ceeb"/>
<text x="918.6" y="456.6" class="s" style="font-size:8px;fill:#222">(H)CaII</text>
<use href="#kpno" x="70.0" y="533.0"/>
<g clip-path="url(#p1c)" fill="none">
<circle cx="128.2" cy="564.4" r="12.1" stroke="#757575" stroke-width="1.15" opacity="0.9"/>
<circle cx="93.5" cy="585.0" r="12.1" stroke="#505050" stroke-width="1.15" opacity="0.75"/>
<circle cx="116.9" cy="585.0" r="12.1" stroke="#505050" stroke-width="1.15" opacity="0.75"/>
<circle cx="176.7" cy="606.0" r="12.1" stroke="#757575" stroke-width="1.15" opacity="0.9"/>
<circle cx="93.5" cy="626.7" r="12.1" stroke="#757575" stroke-width="1.15" opacity="0.9"/>
<circle cx="116.9" cy="626.7" r="12.1" stroke="#757575" stroke-width="1.15" opacity="0.9"/>
<circle cx="164.6" cy="626.7" r="12.1" stroke="#757575" stroke-width="1.15" opacity="0.9"/>
<circle cx="105.6" cy="647.2" r="12.1" stroke="#757575" stroke-width="1.15" opacity="0.9"/>
<circle cx="128.2" cy="647.2" r="12.1" stroke="#757575" stroke-width="1.15" opacity="0.9"/>
<circle cx="152.5" cy="647.2" r="12.1" stroke="#757575" stroke-width="1.15" opacity="0.9"/>
<circle cx="164.6" cy="585.0" r="12.1" stroke="#757575" stroke-width="1.15" opacity="0.9"/>
<circle cx="152.5" cy="564.4" r="12.1" stroke="#757575" stroke-width="1.15" opacity="0.9"/>
<circle cx="188.4" cy="585.0" r="12.1" stroke="#757575" stroke-width="1.15" opacity="0.9"/>
<circle cx="200.2" cy="606.0" r="12.1" stroke="#757575" stroke-width="1.15" opacity="0.9"/>
<circle cx="188.4" cy="626.7" r="12.1" stroke="#757575" stroke-width="1.15" opacity="0.9"/>
<circle cx="176.7" cy="647.2" r="12.1" stroke="#757575" stroke-width="1.15" opacity="0.9"/>
<circle cx="152.5" cy="564.4" r="12.5" stroke="#808080" stroke-width="2.3" stroke-dasharray="1.6 2.0" opacity="0.9"/>
<circle cx="188.4" cy="585.0" r="12.5" stroke="#808080" stroke-width="2.3" stroke-dasharray="1.6 2.0" opacity="0.9"/>
<circle cx="200.2" cy="606.0" r="12.5" stroke="#808080" stroke-width="2.3" stroke-dasharray="1.6 2.0" opacity="0.9"/>
<circle cx="188.4" cy="626.7" r="12.5" stroke="#808080" stroke-width="2.3" stroke-dasharray="1.6 2.0" opacity="0.9"/>
<circle cx="176.7" cy="647.2" r="12.5" stroke="#808080" stroke-width="2.3" stroke-dasharray="1.6 2.0" opacity="0.9"/>
<circle cx="140.7" cy="626.7" r="12.1" stroke="#ffa500" stroke-width="1.2"/>
<circle cx="140.7" cy="585.0" r="12.1" stroke="#ff0000" stroke-width="1.2"/>
<circle cx="140.7" cy="585.0" r="12.6" stroke="#ff0000" stroke-width="2.0" stroke-dasharray="1.6 2.2"/>
<circle cx="128.2" cy="606.0" r="12.1" stroke="#00ff00" stroke-width="1.3"/>
<circle cx="152.5" cy="606.3" r="12.1" stroke="#0000ff" stroke-width="1.3"/>
<rect x="96.0" y="558.6" width="96.4" height="96.4" stroke="#ff0000" stroke-width="1.3"/>
</g>
<text x="143.7" y="547.9" class="s" text-anchor="middle" style="font-size:10.8px;fill:#ff0000;">N</text>
<text x="81.4" y="610.2" class="s" text-anchor="middle" style="font-size:10.8px;fill:#ff0000;">E</text>
<text x="144.2" y="610.6" class="s" text-anchor="middle" style="font-size:10.8px;fill:#ff0000;">+</text>
<rect x="70.0" y="533.0" width="148.4" height="147.2" fill="none" stroke="#000" stroke-width="1.1"/>
<path d="M79.9 680.2V684.0" stroke="#000" stroke-width="1"/>
<text x="79.9" y="695.0" class="s" text-anchor="middle" style="font-size:10.8px;fill:#111;">−4</text>
<path d="M66.2 671.1H70.0" stroke="#000" stroke-width="1"/>
<text x="63.2" y="675.1" class="s" text-anchor="end" style="font-size:10.8px;fill:#111;">−4</text>
<path d="M112.0 680.2V684.0" stroke="#000" stroke-width="1"/>
<text x="112.0" y="695.0" class="s" text-anchor="middle" style="font-size:10.8px;fill:#111;">−2</text>
<path d="M66.2 638.9H70.0" stroke="#000" stroke-width="1"/>
<text x="63.2" y="642.9" class="s" text-anchor="end" style="font-size:10.8px;fill:#111;">−2</text>
<path d="M144.2 680.2V684.0" stroke="#000" stroke-width="1"/>
<text x="144.2" y="695.0" class="s" text-anchor="middle" style="font-size:10.8px;fill:#111;">0</text>
<path d="M66.2 606.8H70.0" stroke="#000" stroke-width="1"/>
<text x="63.2" y="610.8" class="s" text-anchor="end" style="font-size:10.8px;fill:#111;">0</text>
<path d="M176.3 680.2V684.0" stroke="#000" stroke-width="1"/>
<text x="176.3" y="695.0" class="s" text-anchor="middle" style="font-size:10.8px;fill:#111;">2</text>
<path d="M66.2 574.7H70.0" stroke="#000" stroke-width="1"/>
<text x="63.2" y="578.7" class="s" text-anchor="end" style="font-size:10.8px;fill:#111;">2</text>
<path d="M208.4 680.2V684.0" stroke="#000" stroke-width="1"/>
<text x="208.4" y="695.0" class="s" text-anchor="middle" style="font-size:10.8px;fill:#111;">4</text>
<path d="M66.2 542.5H70.0" stroke="#000" stroke-width="1"/>
<text x="63.2" y="546.5" class="s" text-anchor="end" style="font-size:10.8px;fill:#111;">4</text>
<text x="144.2" y="525.7" class="s" text-anchor="middle" style="font-size:13.0px;fill:#111;">Fiber Positions</text>
<text x="144.2" y="707.0" class="s" text-anchor="middle" style="font-size:10.8px;fill:#111;">arcsecs</text>
<g clip-path="url(#p2c)">
<rect x="255.6" y="533.0" width="147.8" height="147.2" fill="#414487"/>
<polygon points="341.9,530.0 405.4,634.1 405.4,651.9 287.3,651.9 287.3,530.0" fill="#3d4e8a" filter="url(#b3)"/>
<polygon points="344.4,554.1 359.7,566.8 374.9,589.7 371.1,601.1 350.8,608.7 329.2,611.3 325.4,587.1 333.0,568.1" fill="#2c728e" filter="url(#b5)" opacity="0.9"/>
<polygon points="330.5,601.9 353.3,609.5 376.2,619.7 394.0,631.1 388.9,641.3 366.0,632.4 341.9,619.7 329.2,610.8" fill="#2f6b8e" filter="url(#b5)" opacity="0.85"/>
<polygon points="392.7,626.0 405.4,628.6 405.4,676.8 388.9,676.8 385.1,651.4" fill="#33638d" filter="url(#b5)" opacity="0.85"/>
<polygon points="336.8,632.4 376.2,636.2 382.5,654.0 371.1,661.6 338.1,656.5" fill="#433e85" filter="url(#b5)" opacity="0.8"/>
<polygon points="288.1,528.0 347.8,528.0 339.6,544.6 324.6,557.0 311.4,551.2" fill="#46125f" filter="url(#b5)"/>
<polygon points="253.3,620.9 273.2,642.4 289.8,654.0 321.3,659.0 316.3,670.6 306.4,682.2 253.3,682.2" fill="#450d5a" filter="url(#b5)"/>
<ellipse cx="350.8" cy="666.7" rx="13" ry="15" fill="#450d5a" filter="url(#b5)"/>
<path d="M331.7 641.3L343.2 674.3" stroke="#46206e" stroke-width="7" filter="url(#b3)" opacity="0.8"/>
<ellipse cx="362.9" cy="598.1" rx="6" ry="5" fill="#472d7b" filter="url(#b3)" opacity="0.9"/>
<ellipse cx="387.6" cy="640.0" rx="5" ry="4.5" fill="#46256e" filter="url(#b3)"/>
<path d="M350.8 542.7L404.0 630.3" stroke="#46307c" stroke-width="2" filter="url(#b2)" opacity="0.85"/>
<polygon points="253.3,542.0 264.8,527.1 295.4,527.7 334.7,598.2 322.6,622.5 288.2,641.2 253.3,620.9" fill="#2f6c8e" filter="url(#b2)"/>
<polygon points="253.3,545.6 265.1,530.4 295.0,531.1 332.6,598.5 321.0,621.7 287.6,639.9 253.3,619.9" fill="#287c8e" filter="url(#b2)"/>
<polygon points="253.3,549.3 265.3,533.8 294.6,534.4 330.5,598.7 319.5,620.8 287.0,638.6 253.3,618.9" fill="#238a8d" filter="url(#b2)"/>
<polygon points="253.3,553.0 265.6,537.1 294.2,537.7 328.4,599.0 318.0,620.0 286.5,637.2 253.3,617.9" fill="#1e9c89" filter="url(#b2)"/>
<polygon points="253.3,556.6 265.8,540.4 293.8,541.0 326.4,599.3 316.4,619.2 285.9,635.9 253.3,616.9" fill="#24aa83" filter="url(#b2)"/>
<polygon points="253.3,560.3 266.1,543.7 293.4,544.3 324.3,599.6 314.9,618.4 285.3,634.5 253.3,615.9" fill="#3bbb75" filter="url(#b2)"/>
<polygon points="253.3,563.9 266.4,547.0 293.0,547.6 322.2,599.9 313.4,617.5 284.7,633.2 253.3,614.9" fill="#58c765" filter="url(#b2)"/>
<polygon points="253.3,567.6 266.6,550.4 292.6,550.9 320.1,600.1 311.8,616.7 284.1,631.9 253.3,613.9" fill="#7fd34e" filter="url(#b2)"/>
<polygon points="253.3,571.3 266.9,553.7 292.2,554.2 318.0,600.4 310.3,615.9 283.5,630.5 253.3,612.9" fill="#a8db34" filter="url(#b2)"/>
<polygon points="253.3,574.9 267.2,557.0 291.9,557.5 315.9,600.7 308.7,615.1 282.9,629.2 253.3,611.9" fill="#d5e21a" filter="url(#b2)"/>
<polygon points="253.3,578.6 267.4,560.3 291.5,560.8 313.8,601.0 307.2,614.2 282.3,627.8 253.3,610.9" fill="#fde725"/>
</g>
<rect x="281.3" y="558.6" width="96.4" height="96.4" fill="none" stroke="#ff0000" stroke-width="1.3"/>
<path d="M292.5 606.8H321.5M337.5 606.8H366.5M329.5 569.8V598.8M329.5 614.8V643.8" stroke="#ff0000" stroke-width="1.3" fill="none"/>
<text x="329.0" y="547.9" class="s" text-anchor="middle" style="font-size:10.8px;fill:#ff0000;">N</text>
<text x="266.9" y="610.2" class="s" text-anchor="middle" style="font-size:10.8px;fill:#ff0000;">E</text>
<rect x="255.6" y="533.0" width="147.8" height="147.2" fill="none" stroke="#000" stroke-width="1.1"/>
<path d="M265.2 680.2V684.0" stroke="#000" stroke-width="1"/>
<text x="265.2" y="695.0" class="s" text-anchor="middle" style="font-size:10.8px;fill:#111;">−4</text>
<path d="M251.8 671.1H255.6" stroke="#000" stroke-width="1"/>
<text x="248.8" y="675.1" class="s" text-anchor="end" style="font-size:10.8px;fill:#111;">−4</text>
<path d="M297.4 680.2V684.0" stroke="#000" stroke-width="1"/>
<text x="297.4" y="695.0" class="s" text-anchor="middle" style="font-size:10.8px;fill:#111;">−2</text>
<path d="M251.8 638.9H255.6" stroke="#000" stroke-width="1"/>
<text x="248.8" y="642.9" class="s" text-anchor="end" style="font-size:10.8px;fill:#111;">−2</text>
<path d="M329.5 680.2V684.0" stroke="#000" stroke-width="1"/>
<text x="329.5" y="695.0" class="s" text-anchor="middle" style="font-size:10.8px;fill:#111;">0</text>
<path d="M251.8 606.8H255.6" stroke="#000" stroke-width="1"/>
<text x="248.8" y="610.8" class="s" text-anchor="end" style="font-size:10.8px;fill:#111;">0</text>
<path d="M361.6 680.2V684.0" stroke="#000" stroke-width="1"/>
<text x="361.6" y="695.0" class="s" text-anchor="middle" style="font-size:10.8px;fill:#111;">2</text>
<path d="M251.8 574.7H255.6" stroke="#000" stroke-width="1"/>
<text x="248.8" y="578.7" class="s" text-anchor="end" style="font-size:10.8px;fill:#111;">2</text>
<path d="M393.8 680.2V684.0" stroke="#000" stroke-width="1"/>
<text x="393.8" y="695.0" class="s" text-anchor="middle" style="font-size:10.8px;fill:#111;">4</text>
<path d="M251.8 542.5H255.6" stroke="#000" stroke-width="1"/>
<text x="248.8" y="546.5" class="s" text-anchor="end" style="font-size:10.8px;fill:#111;">4</text>
<text x="329.5" y="525.7" class="s" text-anchor="middle" style="font-size:13.0px;fill:#111;">Lineflux Map</text>
<text x="329.5" y="707.0" class="s" text-anchor="middle" style="font-size:10.8px;fill:#111;">s/b: 2.61 +/- 0.110</text>
<use href="#kpno" x="440.7" y="533.0"/>
<g clip-path="url(#p3c)" fill="none">
<circle cx="468.4" cy="592.7" r="27.2" fill="#000"/>
<circle cx="468.4" cy="592.7" r="27.2" stroke="#fff" stroke-width="1.1" stroke-dasharray="4 1.8"/>
<circle cx="514.7" cy="606.8" r="46.6" stroke="#ffd700" stroke-width="1.2"/>
<rect x="466.5" y="558.6" width="96.4" height="96.4" stroke="#ff0000" stroke-width="1.3"/>
</g>
<path d="M477.7 606.8H506.7M522.7 606.8H551.7M514.7 569.8V598.8M514.7 614.8V643.8" stroke="#ff0000" stroke-width="1.3" fill="none"/>
<text x="514.2" y="547.9" class="s" text-anchor="middle" style="font-size:10.8px;fill:#ff0000;">N</text>
<text x="452.1" y="610.2" class="s" text-anchor="middle" style="font-size:10.8px;fill:#ff0000;">E</text>
<rect x="440.7" y="533.0" width="147.9" height="147.2" fill="none" stroke="#000" stroke-width="1.1"/>
<path d="M450.4 680.2V684.0" stroke="#000" stroke-width="1"/>
<text x="450.4" y="695.0" class="s" text-anchor="middle" style="font-size:10.8px;fill:#111;">−4</text>
<path d="M436.9 671.1H440.7" stroke="#000" stroke-width="1"/>
<text x="433.9" y="675.1" class="s" text-anchor="end" style="font-size:10.8px;fill:#111;">−4</text>
<path d="M482.6 680.2V684.0" stroke="#000" stroke-width="1"/>
<text x="482.6" y="695.0" class="s" text-anchor="middle" style="font-size:10.8px;fill:#111;">−2</text>
<path d="M436.9 638.9H440.7" stroke="#000" stroke-width="1"/>
<text x="433.9" y="642.9" class="s" text-anchor="end" style="font-size:10.8px;fill:#111;">−2</text>
<path d="M514.7 680.2V684.0" stroke="#000" stroke-width="1"/>
<text x="514.7" y="695.0" class="s" text-anchor="middle" style="font-size:10.8px;fill:#111;">0</text>
<path d="M436.9 606.8H440.7" stroke="#000" stroke-width="1"/>
<text x="433.9" y="610.8" class="s" text-anchor="end" style="font-size:10.8px;fill:#111;">0</text>
<path d="M546.8 680.2V684.0" stroke="#000" stroke-width="1"/>
<text x="546.8" y="695.0" class="s" text-anchor="middle" style="font-size:10.8px;fill:#111;">2</text>
<path d="M436.9 574.7H440.7" stroke="#000" stroke-width="1"/>
<text x="433.9" y="578.7" class="s" text-anchor="end" style="font-size:10.8px;fill:#111;">2</text>
<path d="M579.0 680.2V684.0" stroke="#000" stroke-width="1"/>
<text x="579.0" y="695.0" class="s" text-anchor="middle" style="font-size:10.8px;fill:#111;">4</text>
<path d="M436.9 542.5H440.7" stroke="#000" stroke-width="1"/>
<text x="433.9" y="546.5" class="s" text-anchor="end" style="font-size:10.8px;fill:#111;">4</text>
<text x="514.7" y="525.7" class="s" text-anchor="middle" style="font-size:13.0px;fill:#111;">KPNO(24.7) g</text>
<text x="514.7" y="707.0" class="s" text-anchor="middle" style="font-size:10.8px;fill:#111;">m:18.5 rc:2.9&quot;  s:0.1&quot;</text>
<text x="514.7" y="719.2" class="s" text-anchor="middle" style="font-size:10.8px;fill:#111;">EWr: 0, PLAE: 0.022</text>
</g>
</svg>
</body></html>
